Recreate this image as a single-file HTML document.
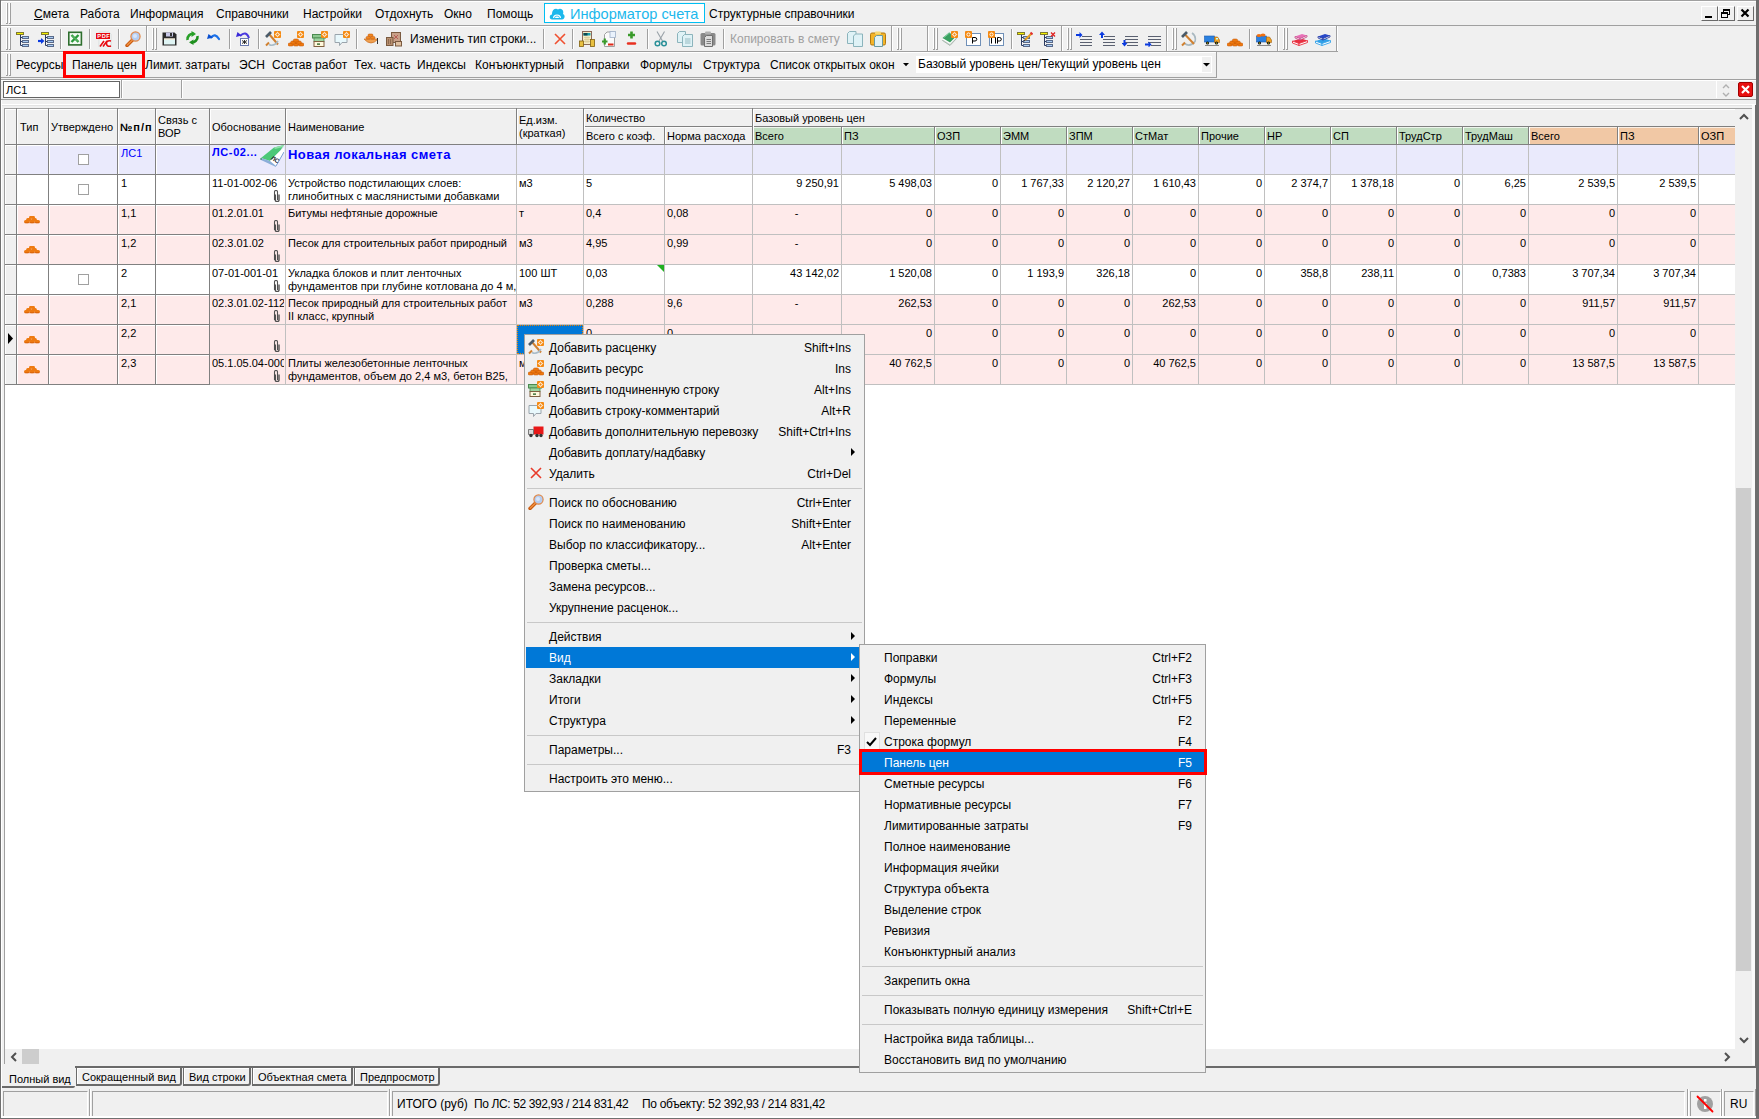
<!DOCTYPE html><html><head><meta charset="utf-8"><style>
*{margin:0;padding:0;box-sizing:border-box}
html,body{width:1759px;height:1119px;overflow:hidden;background:#f0f0f0;font-family:"Liberation Sans", sans-serif;color:#000}
.a{position:absolute}
.t{position:absolute;white-space:nowrap;line-height:13px}
.g{font-size:11px}
.m{font-size:12px}
</style></head><body>
<div class="a" style="left:1px;top:25px;width:1755px;height:1px;background:#a0a0a0"></div>
<div class="a" style="left:6px;top:3px;width:1px;height:21px;background:#fff"></div>
<div class="a" style="left:7px;top:3px;width:1px;height:21px;background:#a0a0a0"></div>
<div class="a" style="left:6px;top:23px;width:2px;height:1px;background:#a0a0a0"></div>
<div class="a" style="left:9px;top:3px;width:1px;height:21px;background:#fff"></div>
<div class="a" style="left:10px;top:3px;width:1px;height:21px;background:#a0a0a0"></div>
<div class="a" style="left:9px;top:23px;width:2px;height:1px;background:#a0a0a0"></div>
<div class="a" style="left:1px;top:1px;width:1755px;height:1px;background:#fff"></div>
<div class="a" style="left:1px;top:1px;width:1px;height:24px;background:#fff"></div>
<div class="t m" style="left:34px;top:8px;"><u>С</u>мета</div>
<div class="t m" style="left:80px;top:8px;">Работа</div>
<div class="t m" style="left:130px;top:8px;">Информация</div>
<div class="t m" style="left:216px;top:8px;">Справочники</div>
<div class="t m" style="left:303px;top:8px;">Настройки</div>
<div class="t m" style="left:375px;top:8px;">Отдохнуть</div>
<div class="t m" style="left:444px;top:8px;">Окно</div>
<div class="t m" style="left:487px;top:8px;">Помощь</div>
<div class="a" style="left:544px;top:3px;width:161px;height:20px;background:#fff;border:1px solid #00bff3"></div>
<svg class="a" style="left:549px;top:7px" width="16" height="13" viewBox="0 0 16 13"><path d="M3 12.5 C0 12.5 0 7.5 3 7.5 C2.5 3 6.5 0.5 9 2.5 C11.5 0.5 15.5 3 14 7 C16.5 8 16 12.5 13 12.5 Z" fill="#1cb8ec"/><path d="M4 11 A4 3.5 0 0 1 12 11 Z" fill="#fff"/><path d="M5.5 11 A2.5 2 0 0 1 10.5 11" stroke="#1cb8ec" stroke-width=".8" fill="none"/></svg>
<div class="t " style="left:570px;top:5px;font-size:14.6px;color:#1cb8ec;line-height:18px">Информатор счета</div>
<div class="t m" style="left:709px;top:8px;">Структурные справочники</div>
<div class="a" style="left:1701px;top:6px;width:17px;height:15px;background:#f0f0f0;border-top:1px solid #fff;border-left:1px solid #fff;border-right:1px solid #696969;border-bottom:1px solid #696969"></div>
<div class="a" style="left:1718px;top:6px;width:17px;height:15px;background:#f0f0f0;border-top:1px solid #fff;border-left:1px solid #fff;border-right:1px solid #696969;border-bottom:1px solid #696969"></div>
<div class="a" style="left:1737px;top:6px;width:17px;height:15px;background:#f0f0f0;border-top:1px solid #fff;border-left:1px solid #fff;border-right:1px solid #696969;border-bottom:1px solid #696969"></div>
<svg class="a" style="left:1701px;top:6px" width="54" height="16"><rect x="4" y="10" width="7" height="2" fill="#000"/><rect x="22.5" y="3.5" width="6" height="5" fill="none" stroke="#000" stroke-width="1"/><rect x="22" y="3" width="7" height="2" fill="#000"/><rect x="20.5" y="6.5" width="6" height="5" fill="#f0f0f0" stroke="#000" stroke-width="1"/><rect x="20" y="6" width="7" height="2" fill="#000"/><path d="M40.5 3.5 L47.5 10.5 M47.5 3.5 L40.5 10.5" stroke="#000" stroke-width="2.2"/></svg>
<div class="a" style="left:1px;top:26px;width:1336px;height:1px;background:#fff"></div>
<div class="a" style="left:1px;top:51px;width:1337px;height:1px;background:#a0a0a0"></div>
<div class="a" style="left:6px;top:28px;width:1px;height:22px;background:#fff"></div>
<div class="a" style="left:7px;top:28px;width:1px;height:22px;background:#a0a0a0"></div>
<div class="a" style="left:6px;top:49px;width:2px;height:1px;background:#a0a0a0"></div>
<div class="a" style="left:9px;top:28px;width:1px;height:22px;background:#fff"></div>
<div class="a" style="left:10px;top:28px;width:1px;height:22px;background:#a0a0a0"></div>
<div class="a" style="left:9px;top:49px;width:2px;height:1px;background:#a0a0a0"></div>
<div class="a" style="left:152px;top:28px;width:1px;height:22px;background:#fff"></div>
<div class="a" style="left:153px;top:28px;width:1px;height:22px;background:#a0a0a0"></div>
<div class="a" style="left:152px;top:49px;width:2px;height:1px;background:#a0a0a0"></div>
<div class="a" style="left:155px;top:28px;width:1px;height:22px;background:#fff"></div>
<div class="a" style="left:156px;top:28px;width:1px;height:22px;background:#a0a0a0"></div>
<div class="a" style="left:155px;top:49px;width:2px;height:1px;background:#a0a0a0"></div>
<div class="a" style="left:897px;top:28px;width:1px;height:22px;background:#fff"></div>
<div class="a" style="left:898px;top:28px;width:1px;height:22px;background:#a0a0a0"></div>
<div class="a" style="left:897px;top:49px;width:2px;height:1px;background:#a0a0a0"></div>
<div class="a" style="left:900px;top:28px;width:1px;height:22px;background:#fff"></div>
<div class="a" style="left:901px;top:28px;width:1px;height:22px;background:#a0a0a0"></div>
<div class="a" style="left:900px;top:49px;width:2px;height:1px;background:#a0a0a0"></div>
<div class="a" style="left:933px;top:28px;width:1px;height:22px;background:#fff"></div>
<div class="a" style="left:934px;top:28px;width:1px;height:22px;background:#a0a0a0"></div>
<div class="a" style="left:933px;top:49px;width:2px;height:1px;background:#a0a0a0"></div>
<div class="a" style="left:936px;top:28px;width:1px;height:22px;background:#fff"></div>
<div class="a" style="left:937px;top:28px;width:1px;height:22px;background:#a0a0a0"></div>
<div class="a" style="left:936px;top:49px;width:2px;height:1px;background:#a0a0a0"></div>
<div class="a" style="left:1067px;top:28px;width:1px;height:22px;background:#fff"></div>
<div class="a" style="left:1068px;top:28px;width:1px;height:22px;background:#a0a0a0"></div>
<div class="a" style="left:1067px;top:49px;width:2px;height:1px;background:#a0a0a0"></div>
<div class="a" style="left:1070px;top:28px;width:1px;height:22px;background:#fff"></div>
<div class="a" style="left:1071px;top:28px;width:1px;height:22px;background:#a0a0a0"></div>
<div class="a" style="left:1070px;top:49px;width:2px;height:1px;background:#a0a0a0"></div>
<div class="a" style="left:1172px;top:28px;width:1px;height:22px;background:#fff"></div>
<div class="a" style="left:1173px;top:28px;width:1px;height:22px;background:#a0a0a0"></div>
<div class="a" style="left:1172px;top:49px;width:2px;height:1px;background:#a0a0a0"></div>
<div class="a" style="left:1175px;top:28px;width:1px;height:22px;background:#fff"></div>
<div class="a" style="left:1176px;top:28px;width:1px;height:22px;background:#a0a0a0"></div>
<div class="a" style="left:1175px;top:49px;width:2px;height:1px;background:#a0a0a0"></div>
<div class="a" style="left:1283px;top:28px;width:1px;height:22px;background:#fff"></div>
<div class="a" style="left:1284px;top:28px;width:1px;height:22px;background:#a0a0a0"></div>
<div class="a" style="left:1283px;top:49px;width:2px;height:1px;background:#a0a0a0"></div>
<div class="a" style="left:1286px;top:28px;width:1px;height:22px;background:#fff"></div>
<div class="a" style="left:1287px;top:28px;width:1px;height:22px;background:#a0a0a0"></div>
<div class="a" style="left:1286px;top:49px;width:2px;height:1px;background:#a0a0a0"></div>
<div class="a" style="left:146px;top:26px;width:1px;height:25px;background:#a0a0a0"></div>
<div class="a" style="left:147px;top:26px;width:1px;height:25px;background:#fff"></div>
<div class="a" style="left:891px;top:26px;width:1px;height:25px;background:#a0a0a0"></div>
<div class="a" style="left:892px;top:26px;width:1px;height:25px;background:#fff"></div>
<div class="a" style="left:927px;top:26px;width:1px;height:25px;background:#a0a0a0"></div>
<div class="a" style="left:928px;top:26px;width:1px;height:25px;background:#fff"></div>
<div class="a" style="left:1061px;top:26px;width:1px;height:25px;background:#a0a0a0"></div>
<div class="a" style="left:1062px;top:26px;width:1px;height:25px;background:#fff"></div>
<div class="a" style="left:1166px;top:26px;width:1px;height:25px;background:#a0a0a0"></div>
<div class="a" style="left:1167px;top:26px;width:1px;height:25px;background:#fff"></div>
<div class="a" style="left:1277px;top:26px;width:1px;height:25px;background:#a0a0a0"></div>
<div class="a" style="left:1278px;top:26px;width:1px;height:25px;background:#fff"></div>
<div class="a" style="left:1336px;top:26px;width:1px;height:25px;background:#a0a0a0"></div>
<div class="a" style="left:1337px;top:26px;width:1px;height:25px;background:#fff"></div>
<div class="a" style="left:60px;top:29px;width:1px;height:20px;background:#a0a0a0"></div>
<div class="a" style="left:61px;top:29px;width:1px;height:20px;background:#fff"></div>
<div class="a" style="left:89px;top:29px;width:1px;height:20px;background:#a0a0a0"></div>
<div class="a" style="left:90px;top:29px;width:1px;height:20px;background:#fff"></div>
<div class="a" style="left:118px;top:29px;width:1px;height:20px;background:#a0a0a0"></div>
<div class="a" style="left:119px;top:29px;width:1px;height:20px;background:#fff"></div>
<div class="a" style="left:229px;top:29px;width:1px;height:20px;background:#a0a0a0"></div>
<div class="a" style="left:230px;top:29px;width:1px;height:20px;background:#fff"></div>
<div class="a" style="left:258px;top:29px;width:1px;height:20px;background:#a0a0a0"></div>
<div class="a" style="left:259px;top:29px;width:1px;height:20px;background:#fff"></div>
<div class="a" style="left:356px;top:29px;width:1px;height:20px;background:#a0a0a0"></div>
<div class="a" style="left:357px;top:29px;width:1px;height:20px;background:#fff"></div>
<div class="a" style="left:543px;top:29px;width:1px;height:20px;background:#a0a0a0"></div>
<div class="a" style="left:544px;top:29px;width:1px;height:20px;background:#fff"></div>
<div class="a" style="left:572px;top:29px;width:1px;height:20px;background:#a0a0a0"></div>
<div class="a" style="left:573px;top:29px;width:1px;height:20px;background:#fff"></div>
<div class="a" style="left:647px;top:29px;width:1px;height:20px;background:#a0a0a0"></div>
<div class="a" style="left:648px;top:29px;width:1px;height:20px;background:#fff"></div>
<div class="a" style="left:723px;top:29px;width:1px;height:20px;background:#a0a0a0"></div>
<div class="a" style="left:724px;top:29px;width:1px;height:20px;background:#fff"></div>
<div class="a" style="left:1011px;top:29px;width:1px;height:20px;background:#a0a0a0"></div>
<div class="a" style="left:1012px;top:29px;width:1px;height:20px;background:#fff"></div>
<div class="a" style="left:1249px;top:29px;width:1px;height:20px;background:#a0a0a0"></div>
<div class="a" style="left:1250px;top:29px;width:1px;height:20px;background:#fff"></div>
<svg class="a" style="left:16px;top:31px" width="16" height="16" viewBox="0 0 16 16"><rect x="0.5" y="1.5" width="7" height="2" fill="#f4f000" stroke="#807a30" stroke-width="1"/><path d="M4.5 4 V14.5 M4.5 6.5 H6 M4.5 10.5 H6 M4.5 14.5 H6" stroke="#2a3a60" stroke-width="1" fill="none"/><rect x="6.5" y="5.5" width="6" height="2" fill="#a8ccf4" stroke="#5a6a8a" stroke-width="1"/><rect x="6.5" y="9.5" width="6" height="2" fill="#a8ccf4" stroke="#5a6a8a" stroke-width="1"/><rect x="6.5" y="13.5" width="6" height="2" fill="#a8ccf4" stroke="#5a6a8a" stroke-width="1"/></svg>
<svg class="a" style="left:38px;top:31px" width="16" height="16" viewBox="0 0 16 16"><rect x="3.5" y="1.5" width="7" height="2" fill="#f4f000" stroke="#807a30" stroke-width="1"/><path d="M7.5 4 V14.5 M7.5 6.5 H9 M7.5 10.5 H9 M7.5 14.5 H9" stroke="#2a3a60" stroke-width="1" fill="none"/><rect x="9.5" y="5.5" width="6" height="2" fill="#a8ccf4" stroke="#5a6a8a" stroke-width="1"/><rect x="9.5" y="9.5" width="6" height="2" fill="#a8ccf4" stroke="#5a6a8a" stroke-width="1"/><rect x="9.5" y="13.5" width="6" height="2" fill="#a8ccf4" stroke="#5a6a8a" stroke-width="1"/><path d="M0 10 H3.5" stroke="#0a3ae0" stroke-width="2.2"/><path d="M3 7 L6.5 10 L3 13Z" fill="#0a3ae0"/></svg>
<svg class="a" style="left:68px;top:31px" width="16" height="16" viewBox="0 0 16 16"><rect x="0.8" y="1.3" width="12.6" height="12.6" fill="#f4fbf4" stroke="#2e6e2e" stroke-width="1.6"/><path d="M3.5 4 L10.5 11 M10.5 4 L3.5 11" stroke="#2a9a3a" stroke-width="2.4"/><path d="M4 4.5 L10 10.5" stroke="#9ad89a" stroke-width=".7"/></svg>
<svg class="a" style="left:96px;top:31px" width="16" height="16" viewBox="0 0 16 16"><path d="M3 1 H13 L15 3 V16 H3Z" fill="#f8f8f8" stroke="#d0d8d8" stroke-width=".8"/><rect x="0" y="2" width="14" height="6" fill="#e80a10"/><text x="1.3" y="7.3" font-size="5.6" font-weight="bold" font-family="Liberation Sans" fill="#fff" letter-spacing=".6">PDF</text><path d="M4 15.5 L8 10 M7 15.5 L11 10" stroke="#e80a10" stroke-width="1.6"/><path d="M15 10 Q10 9 10.5 13 Q11 16 15 15" stroke="#e80a10" stroke-width="1.6" fill="none"/></svg>
<svg class="a" style="left:125px;top:31px" width="16" height="16" viewBox="0 0 16 16"><path d="M2 14.5 L7.5 9" stroke="#c85a10" stroke-width="3.4" stroke-linecap="round"/><path d="M2.3 14 L7 9.5" stroke="#f09040" stroke-width="1.4" stroke-linecap="round"/><circle cx="10.5" cy="5.5" r="4.6" fill="#b4cdf2" stroke="#e08848" stroke-width="1.2"/><circle cx="10" cy="5" r="2" fill="#d8e6fa"/></svg>
<svg class="a" style="left:162px;top:31px" width="16" height="16" viewBox="0 0 16 16"><path d="M0.5 1.5 H12.5 L14.5 3.5 V14.5 H0.5Z" fill="#2a2a2a"/><rect x="4" y="1.5" width="7" height="4" fill="#c8c8e8"/><rect x="8" y="2" width="2" height="3" fill="#333"/><rect x="2" y="7.5" width="11" height="6" fill="#dff4f4"/><rect x="2" y="7.5" width="11" height="1" fill="#fce4c8"/></svg>
<svg class="a" style="left:185px;top:31px" width="16" height="16" viewBox="0 0 16 16"><path d="M2.5 9 A5.5 5.5 0 0 1 9 2.8" stroke="#28a028" stroke-width="2.6" fill="none"/><path d="M12.5 5 A5.5 5.5 0 0 1 6 11.2" stroke="#1e901e" stroke-width="2.6" fill="none"/><path d="M6.5 0 L11 3 L6.5 6Z" fill="#28a028"/><path d="M8.5 8.5 L4 11.2 L8.5 14Z" fill="#1e901e"/></svg>
<svg class="a" style="left:207px;top:31px" width="16" height="16" viewBox="0 0 16 16"><path d="M4 6.5 Q8 1.5 12 8" stroke="#1a70e8" stroke-width="2.2" fill="none" stroke-linecap="round"/><path d="M0 8 L1.5 3 L6 6.5Z" fill="#0a50d0"/></svg>
<svg class="a" style="left:236px;top:31px" width="16" height="16" viewBox="0 0 16 16"><path d="M4 5 Q10 -1 13 7" stroke="#4a3ae0" stroke-width="2" fill="none"/><path d="M0 6 L1.5 1 L5.5 4.5Z" fill="#3a2ad8"/><rect x="4.5" y="7.5" width="8" height="7" fill="#fff" stroke="#6a7ab0" stroke-width="1"/><path d="M6 9.5 L11 12.5 M11 9.5 L6 12.5 M8.5 9 V13" stroke="#222" stroke-width=".9"/></svg>
<svg class="a" style="left:265px;top:31px" width="16" height="16" viewBox="0 0 16 16"><path d="M4 3 L13 13.5" stroke="#d08030" stroke-width="2"/><path d="M1 6 L6 1" stroke="#4a5a68" stroke-width="2.6"/><path d="M1 14.5 L4 11.5" stroke="#d08030" stroke-width="2"/><path d="M4 13.5 Q9 16 13 10" stroke="#a8bcc8" stroke-width="1.6" fill="none"/><rect x="9" y="0" width="7" height="7" rx="1" fill="#f58a12"/><circle cx="12.5" cy="3.5" r="1.6" fill="none" stroke="#fff" stroke-width="1"/><path d="M12.5 0.8 V1.6 M12.5 5.4 V6.2 M9.8 3.5 H10.6 M14.4 3.5 H15.2" stroke="#fff" stroke-width=".8"/></svg>
<svg class="a" style="left:288px;top:31px" width="16" height="16" viewBox="0 0 16 16"><g fill="#ee7a10" stroke="#c05000" stroke-width=".5"><rect x="0" y="12" width="5.4" height="3" rx="1.5"/><rect x="5.3" y="12" width="5.4" height="3" rx="1.5"/><rect x="10.6" y="12" width="5.4" height="3" rx="1.5"/><rect x="2.6" y="10" width="5.4" height="3" rx="1.5"/><rect x="8" y="10" width="5.4" height="3" rx="1.5"/><rect x="5.3" y="8" width="5.4" height="3" rx="1.5"/></g><rect x="9" y="0" width="7" height="7" rx="1" fill="#f58a12"/><circle cx="12.5" cy="3.5" r="1.6" fill="none" stroke="#fff" stroke-width="1"/><path d="M12.5 0.8 V1.6 M12.5 5.4 V6.2 M9.8 3.5 H10.6 M14.4 3.5 H15.2" stroke="#fff" stroke-width=".8"/></svg>
<svg class="a" style="left:312px;top:31px" width="16" height="16" viewBox="0 0 16 16"><rect x="0.5" y="3.5" width="13" height="3.5" fill="#8cc890" stroke="#4a8a50" stroke-width="1"/><rect x="2" y="7" width="10" height="3.5" fill="#9cd4a0" stroke="#4a8a50" stroke-width=".8"/><rect x="2" y="10.5" width="10" height="5" fill="#fff8dc" stroke="#806040" stroke-width="1"/><rect x="5" y="12.5" width="3" height="1.2" fill="#105010"/><rect x="9" y="0" width="7" height="7" rx="1" fill="#f58a12"/><circle cx="12.5" cy="3.5" r="1.6" fill="none" stroke="#fff" stroke-width="1"/><path d="M12.5 0.8 V1.6 M12.5 5.4 V6.2 M9.8 3.5 H10.6 M14.4 3.5 H15.2" stroke="#fff" stroke-width=".8"/></svg>
<svg class="a" style="left:334px;top:31px" width="16" height="16" viewBox="0 0 16 16"><path d="M1 3.5 H13 V11.5 H8 L5.5 14.5 V11.5 H1Z" fill="#e8f8fc" stroke="#9aa4ac" stroke-width="1"/><rect x="9" y="0" width="7" height="7" rx="1" fill="#f58a12"/><circle cx="12.5" cy="3.5" r="1.6" fill="none" stroke="#fff" stroke-width="1"/><path d="M12.5 0.8 V1.6 M12.5 5.4 V6.2 M9.8 3.5 H10.6 M14.4 3.5 H15.2" stroke="#fff" stroke-width=".8"/></svg>
<svg class="a" style="left:363px;top:31px" width="16" height="16" viewBox="0 0 16 16"><path d="M1 8 Q8 16 15 8Z" fill="#f0a050" stroke="#c06010" stroke-width=".6"/><g fill="#f08820" stroke="#c05000" stroke-width=".5"><rect x="3" y="5.5" width="4.5" height="2.5" rx="1.2"/><rect x="7.5" y="5.5" width="4.5" height="2.5" rx="1.2"/><rect x="5" y="3" width="5" height="2.5" rx="1.2"/></g><path d="M14.5 7 V13" stroke="#333" stroke-width="1"/></svg>
<svg class="a" style="left:386px;top:31px" width="16" height="16" viewBox="0 0 16 16"><rect x="5.5" y="1.5" width="9" height="10" fill="#c8a088" stroke="#7a5a40" stroke-width="1"/><path d="M8 4 L12 8 M12 4 L8 8" stroke="#b04040" stroke-width=".7"/><rect x="0.5" y="6.5" width="6.5" height="8" fill="#b89070" stroke="#7a5a40" stroke-width="1"/><path d="M2.5 8 V13 M4.5 8 V13" stroke="#7a5a40" stroke-width=".7"/><rect x="9.5" y="10.5" width="6" height="4.5" fill="#e0c0a0" stroke="#7a5a40" stroke-width="1"/></svg>
<svg class="a" style="left:552px;top:31px" width="16" height="16" viewBox="0 0 16 16"><path d="M3 3 L13 13 M13 3 L3 13" stroke="#f05030" stroke-width="1.6"/></svg>
<svg class="a" style="left:579px;top:31px" width="16" height="16" viewBox="0 0 16 16"><rect x="3.5" y="0.5" width="9" height="13" fill="#f4ecc8" stroke="#8a6a5a" stroke-width="1"/><rect x="4.5" y="2" width="7" height="2.5" fill="#1aa0b0"/><rect x="4.5" y="2" width="4" height="2.5" fill="#104a50"/><path d="M5 6.5 H11 M5 8.5 H11 M5 10.5 H11 M7 5.5 V12 M9 5.5 V12" stroke="#d8c890" stroke-width=".7"/><g fill="#e8c040" stroke="#806010" stroke-width=".8"><rect x="0.5" y="10" width="4" height="5.5"/><rect x="11.5" y="8.5" width="4" height="7"/></g></svg>
<svg class="a" style="left:602px;top:31px" width="16" height="16" viewBox="0 0 16 16"><path d="M2.5 3.5 L5 1 H12.5 V15.5 H2.5Z" fill="#fafafa" stroke="#a0a0a0" stroke-width="1"/><rect x="8" y="0.5" width="5.5" height="6" fill="#eaf2fc" stroke="#a0b0c8" stroke-width=".8"/><path d="M0 10.5 H5.5 M2.75 7.5 V13.5" stroke="#3a9a2a" stroke-width="2.2"/><path d="M6 13.5 H11.5" stroke="#e02818" stroke-width="2"/></svg>
<svg class="a" style="left:624px;top:31px" width="16" height="16" viewBox="0 0 16 16"><path d="M4 4 H11 M7.5 0.5 V7.5" stroke="#3a9a2a" stroke-width="2.6"/><path d="M4 12.5 H11" stroke="#e83020" stroke-width="2.4" stroke-linecap="round"/></svg>
<svg class="a" style="left:653px;top:31px" width="16" height="16" viewBox="0 0 16 16"><path d="M4 0.5 L9.5 10 M11.5 0.5 L6 10" stroke="#9aa2a8" stroke-width="1.1"/><circle cx="4.5" cy="12.5" r="2.3" fill="none" stroke="#2a9098" stroke-width="1.5"/><circle cx="11" cy="12.5" r="2.3" fill="none" stroke="#2a9098" stroke-width="1.5"/></svg>
<svg class="a" style="left:677px;top:31px" width="16" height="16" viewBox="0 0 16 16"><path d="M0.5 2.5 L2.5 0.5 H8.5 V11.5 H0.5Z" fill="#dff2f6" stroke="#8cb4bc" stroke-width="1"/><path d="M5.5 5.5 L7.5 3.5 H15.5 V15.5 H5.5Z" fill="#dff2f6" stroke="#8cb4bc" stroke-width="1"/><path d="M8 8 H13.5 M8 10 H13.5 M8 12 H13.5" stroke="#8cb4bc" stroke-width=".9"/></svg>
<svg class="a" style="left:700px;top:31px" width="16" height="16" viewBox="0 0 16 16"><rect x="0.5" y="2" width="15" height="12.5" rx="1.5" fill="#8a8a8a"/><rect x="5" y="0.5" width="6" height="3" rx="1" fill="#b0b0b0"/><path d="M4.5 6.5 L6.5 4.5 H12.5 V15.5 H4.5Z" fill="#dcdcdc" stroke="#707070" stroke-width="1"/><path d="M6.5 8.5 H11 M6.5 10.5 H11 M6.5 12.5 H11" stroke="#707070" stroke-width=".9"/></svg>
<svg class="a" style="left:847px;top:31px" width="16" height="16" viewBox="0 0 16 16"><path d="M0.5 2.5 L2.5 0.5 H9 V12.5 H0.5Z" fill="#dff2f6" stroke="#8cb4bc" stroke-width="1"/><path d="M6.5 5 L8.5 3 H15.5 V15.5 H6.5Z" fill="#dff2f6" stroke="#8cb4bc" stroke-width="1"/></svg>
<svg class="a" style="left:870px;top:31px" width="16" height="16" viewBox="0 0 16 16"><rect x="0.5" y="2" width="15" height="12" rx="1.5" fill="#f4b428" stroke="#b07a10" stroke-width="1"/><rect x="5" y="0.5" width="6" height="3" rx="1" fill="#f8d870"/><path d="M4.5 6.5 L6.5 4.5 H12.5 V15.5 H4.5Z" fill="#dff2f6" stroke="#6a9aa0" stroke-width="1"/></svg>
<svg class="a" style="left:942px;top:31px" width="16" height="16" viewBox="0 0 16 16"><path d="M0.5 9.5 L7 4 L14.5 7.5 L8 14.5Z" fill="#c8d0cc" stroke="#8aa090" stroke-width=".6"/><path d="M0.5 8.5 L7 3 L14.5 6.5 L8 13Z" fill="#fff"/><path d="M0.5 7 L7 1.5 L14.5 5 L8 11.5Z" fill="#3aa060"/><path d="M2 6.5 L7.5 2 L13 4.8" stroke="#8ad8a8" stroke-width=".8" fill="none"/><rect x="9" y="0" width="7" height="7" rx="1" fill="#f58a12"/><circle cx="12.5" cy="3.5" r="1.6" fill="none" stroke="#fff" stroke-width="1"/><path d="M12.5 0.8 V1.6 M12.5 5.4 V6.2 M9.8 3.5 H10.6 M14.4 3.5 H15.2" stroke="#fff" stroke-width=".8"/></svg>
<svg class="a" style="left:965px;top:31px" width="16" height="16" viewBox="0 0 16 16"><rect x="1.5" y="2.5" width="14" height="12" fill="#fff" stroke="#7090b8" stroke-width="1"/><path d="M7.5 12.5 V6.5 H10 Q11.8 6.5 11.8 8.3 Q11.8 10 10 10 H7.5" stroke="#000" stroke-width="1" fill="none"/><rect x="0" y="0" width="7" height="7" rx="1" fill="#f58a12"/><circle cx="3.5" cy="3.5" r="1.6" fill="none" stroke="#fff" stroke-width="1"/></svg>
<svg class="a" style="left:988px;top:31px" width="16" height="16" viewBox="0 0 16 16"><rect x="1.5" y="2.5" width="14" height="12" fill="#fff" stroke="#7090b8" stroke-width="1"/><path d="M3.5 12.5 V6.5 H7.5 V12.5" stroke="#000" stroke-width="1" fill="none"/><path d="M9.5 12.5 V6.5 H11.5 Q13.3 6.5 13.3 8.3 Q13.3 10 11.5 10 H9.5" stroke="#000" stroke-width="1" fill="none"/><rect x="0" y="0" width="7" height="7" rx="1" fill="#f58a12"/><circle cx="3.5" cy="3.5" r="1.6" fill="none" stroke="#fff" stroke-width="1"/></svg>
<svg class="a" style="left:1017px;top:31px" width="16" height="16" viewBox="0 0 16 16"><rect x="0.5" y="1.5" width="7" height="2" fill="#f4f000" stroke="#807a30" stroke-width="1"/><path d="M4.5 4 V14.5 M4.5 6.5 H6 M4.5 10.5 H6 M4.5 14.5 H6" stroke="#2a3a60" stroke-width="1" fill="none"/><rect x="6.5" y="5.5" width="6" height="2" fill="#a8ccf4" stroke="#5a6a8a" stroke-width="1"/><rect x="6.5" y="9.5" width="6" height="2" fill="#a8ccf4" stroke="#5a6a8a" stroke-width="1"/><rect x="6.5" y="13.5" width="6" height="2" fill="#a8ccf4" stroke="#5a6a8a" stroke-width="1"/><path d="M8 9 L14.5 2.5" stroke="#e8a020" stroke-width="2.2"/><path d="M13.5 1.5 L15.5 3.5" stroke="#e03030" stroke-width="2"/><path d="M7 10.5 L8 8.5" stroke="#333" stroke-width="1"/></svg>
<svg class="a" style="left:1040px;top:31px" width="16" height="16" viewBox="0 0 16 16"><rect x="0.5" y="1.5" width="7" height="2" fill="#f4f000" stroke="#807a30" stroke-width="1"/><path d="M4.5 4 V14.5 M4.5 6.5 H6 M4.5 10.5 H6 M4.5 14.5 H6" stroke="#2a3a60" stroke-width="1" fill="none"/><rect x="6.5" y="5.5" width="6" height="2" fill="#a8ccf4" stroke="#5a6a8a" stroke-width="1"/><rect x="6.5" y="9.5" width="6" height="2" fill="#a8ccf4" stroke="#5a6a8a" stroke-width="1"/><rect x="6.5" y="13.5" width="6" height="2" fill="#a8ccf4" stroke="#5a6a8a" stroke-width="1"/><path d="M11 1.5 L15 5.5 M15 1.5 L11 5.5" stroke="#e02020" stroke-width="1.3"/></svg>
<svg class="a" style="left:1076px;top:31px" width="16" height="16" viewBox="0 0 16 16"><path d="M6 5.5 H16 M4 8.5 H16 M4 11.5 H16 M4 14.5 H16" stroke="#5a6070" stroke-width="1.2"/><path d="M0 4 H4" stroke="#0a3ae0" stroke-width="2"/><path d="M3.5 1 L6.5 4 L3.5 7Z" fill="#0a3ae0"/></svg>
<svg class="a" style="left:1099px;top:31px" width="16" height="16" viewBox="0 0 16 16"><path d="M5 5.5 H16 M4 8.5 H16 M4 11.5 H16 M4 14.5 H16" stroke="#5a6070" stroke-width="1.2"/><path d="M3 7 V3.5" stroke="#0a3ae0" stroke-width="2"/><path d="M0 4 L3 0.5 L6 4Z" fill="#0a3ae0"/></svg>
<svg class="a" style="left:1122px;top:31px" width="16" height="16" viewBox="0 0 16 16"><path d="M3 5.5 H16 M3 8.5 H16 M3 11.5 H16 M5 14.5 H16" stroke="#5a6070" stroke-width="1.2"/><path d="M2.5 9 V12.5" stroke="#0a3ae0" stroke-width="2"/><path d="M-0.5 12 L2.5 15.5 L5.5 12Z" fill="#0a3ae0"/></svg>
<svg class="a" style="left:1145px;top:31px" width="16" height="16" viewBox="0 0 16 16"><path d="M3 5.5 H16 M3 8.5 H16 M3 11.5 H16 M6 14.5 H16" stroke="#5a6070" stroke-width="1.2"/><path d="M0 13.5 H4" stroke="#0a3ae0" stroke-width="2"/><path d="M3.5 10.5 L6.5 13.5 L3.5 16.5Z" fill="#0a3ae0"/></svg>
<svg class="a" style="left:1181px;top:31px" width="16" height="16" viewBox="0 0 16 16"><path d="M3.5 12.5 Q9 16.5 14 10.5 Q15.5 5 11 2" stroke="#a8b8c0" stroke-width="1.6" fill="none"/><path d="M4 3.5 L13 13" stroke="#d08030" stroke-width="2"/><path d="M1 6 L6 1" stroke="#4a5a68" stroke-width="2.6"/><path d="M1 14.5 L4 11.5" stroke="#d08030" stroke-width="2"/></svg>
<svg class="a" style="left:1204px;top:31px" width="16" height="16" viewBox="0 0 16 16"><rect x="0.5" y="5" width="10" height="6" fill="#2a80e0" stroke="#1a5ab0" stroke-width=".6"/><path d="M10.5 6 H13.5 L15.5 9 V11.5 H10.5Z" fill="#f0a020" stroke="#a06010" stroke-width=".6"/><rect x="12" y="7" width="2" height="1.5" fill="#cfe"/><circle cx="3.5" cy="12" r="1.6" fill="#111"/><circle cx="12.5" cy="12" r="1.6" fill="#111"/><circle cx="3.5" cy="12" r=".6" fill="#ee0"/><circle cx="12.5" cy="12" r=".6" fill="#ee0"/><rect x="1" y="14" width="14" height="1" fill="#888"/></svg>
<svg class="a" style="left:1227px;top:31px" width="16" height="16" viewBox="0 0 16 16"><g fill="#ee7a10" stroke="#c05000" stroke-width=".5"><rect x="0" y="12" width="5.4" height="3" rx="1.5"/><rect x="5.3" y="12" width="5.4" height="3" rx="1.5"/><rect x="10.6" y="12" width="5.4" height="3" rx="1.5"/><rect x="2.6" y="10" width="5.4" height="3" rx="1.5"/><rect x="8" y="10" width="5.4" height="3" rx="1.5"/><rect x="5.3" y="8" width="5.4" height="3" rx="1.5"/></g></svg>
<svg class="a" style="left:1256px;top:31px" width="16" height="16" viewBox="0 0 16 16"><rect x="0.5" y="5" width="10" height="6" fill="#2a80e0" stroke="#1a5ab0" stroke-width=".6"/><g fill="#f07010"><ellipse cx="3" cy="4.5" rx="2.5" ry="1.5"/><ellipse cx="7" cy="4" rx="2.5" ry="1.5"/></g><path d="M10.5 6 H13.5 L15.5 9 V11.5 H10.5Z" fill="#f0a020" stroke="#a06010" stroke-width=".6"/><circle cx="3.5" cy="12" r="1.6" fill="#111"/><circle cx="12.5" cy="12" r="1.6" fill="#111"/><circle cx="3.5" cy="12" r=".6" fill="#ee0"/><circle cx="12.5" cy="12" r=".6" fill="#ee0"/><rect x="1" y="14" width="14" height="1" fill="#888"/></svg>
<svg class="a" style="left:1292px;top:31px" width="16" height="16" viewBox="0 0 16 16"><path d="M0.5 10 L9 7.5 L15.5 9.5 L7 12.5Z" fill="#e83040"/><path d="M0.5 10 L7 12.5 L7 14.5 L0.5 12Z" fill="#fff" stroke="#e83040" stroke-width=".9"/><path d="M7 12.5 L15.5 9.5 L15.5 11.5 L7 14.5Z" fill="#fff" stroke="#e83040" stroke-width=".9"/><path d="M3 5.5 L10 3 L15 4.5 L8 7.5Z" fill="#e870b8"/><path d="M3 5.5 L8 7.5 L8 9 L3 7Z" fill="#fff" stroke="#c04080" stroke-width=".8"/><path d="M8 7.5 L15 4.5 L15 6 L8 9Z" fill="#fff" stroke="#c04080" stroke-width=".8"/></svg>
<svg class="a" style="left:1315px;top:31px" width="16" height="16" viewBox="0 0 16 16"><path d="M0.5 10 L9 7.5 L15.5 9.5 L7 12.5Z" fill="#30a0e8"/><path d="M0.5 10 L7 12.5 L7 14.5 L0.5 12Z" fill="#fff" stroke="#30a0e8" stroke-width=".9"/><path d="M7 12.5 L15.5 9.5 L15.5 11.5 L7 14.5Z" fill="#fff" stroke="#30a0e8" stroke-width=".9"/><path d="M3 5.5 L10 3 L15 4.5 L8 7.5Z" fill="#2848c8"/><path d="M3 5.5 L8 7.5 L8 9 L3 7Z" fill="#fff" stroke="#1a30a0" stroke-width=".8"/><path d="M8 7.5 L15 4.5 L15 6 L8 9Z" fill="#fff" stroke="#1a30a0" stroke-width=".8"/></svg>
<div class="t m" style="left:410px;top:33px;">Изменить тип строки...</div>
<div class="t m" style="left:730px;top:33px;color:#a0a0a0">Копировать в смету</div>
<div class="a" style="left:1px;top:52px;width:1215px;height:1px;background:#fff"></div>
<div class="a" style="left:1px;top:77px;width:1216px;height:1px;background:#a0a0a0"></div>
<div class="a" style="left:6px;top:54px;width:1px;height:22px;background:#fff"></div>
<div class="a" style="left:7px;top:54px;width:1px;height:22px;background:#a0a0a0"></div>
<div class="a" style="left:6px;top:75px;width:2px;height:1px;background:#a0a0a0"></div>
<div class="a" style="left:9px;top:54px;width:1px;height:22px;background:#fff"></div>
<div class="a" style="left:10px;top:54px;width:1px;height:22px;background:#a0a0a0"></div>
<div class="a" style="left:9px;top:75px;width:2px;height:1px;background:#a0a0a0"></div>
<div class="a" style="left:1216px;top:52px;width:1px;height:25px;background:#a0a0a0"></div>
<div class="t m" style="left:16px;top:59px;">Ресурсы</div>
<div class="t m" style="left:72px;top:59px;">Панель цен</div>
<div class="t m" style="left:145px;top:59px;">Лимит. затраты</div>
<div class="t m" style="left:239px;top:59px;">ЭСН</div>
<div class="t m" style="left:272px;top:59px;">Состав работ</div>
<div class="t m" style="left:354px;top:59px;">Тех. часть</div>
<div class="t m" style="left:417px;top:59px;">Индексы</div>
<div class="t m" style="left:475px;top:59px;">Конъюнктурный</div>
<div class="t m" style="left:576px;top:59px;">Поправки</div>
<div class="t m" style="left:640px;top:59px;">Формулы</div>
<div class="t m" style="left:703px;top:59px;">Структура</div>
<div class="t m" style="left:770px;top:59px;">Список открытых окон</div>
<svg class="a" style="left:903px;top:63px" width="8" height="5" viewBox="0 0 8 5"><path d="M0 0 H6 L3 3.2Z" fill="#000"/></svg>
<div class="a" style="left:916px;top:56px;width:296px;height:17px;background:#fff"></div>
<div class="a" style="left:1202px;top:57px;width:9px;height:15px;background:#f0f0f0"></div>
<div class="t m" style="left:918px;top:58px;">Базовый уровень цен/Текущий уровень цен</div>
<svg class="a" style="left:1203px;top:63px" width="8" height="5" viewBox="0 0 8 5"><path d="M0 0 H7 L3.5 3.5Z" fill="#000"/></svg>
<div class="a" style="left:63px;top:51px;width:82px;height:27px;border:3px solid #ff0000"></div>
<div class="a" style="left:1px;top:79px;width:1755px;height:1px;background:#a0a0a0"></div>
<div class="a" style="left:1px;top:80px;width:1755px;height:1px;background:#fff"></div>
<div class="a" style="left:3px;top:81px;width:117px;height:17px;background:#fff;border:1px solid #646464"></div>
<div class="t g" style="left:6px;top:84px;">ЛС1</div>
<div class="a" style="left:121px;top:80px;width:1px;height:18px;background:#a0a0a0"></div>
<div class="a" style="left:122px;top:80px;width:1px;height:18px;background:#fff"></div>
<div class="a" style="left:181px;top:80px;width:1px;height:18px;background:#a0a0a0"></div>
<div class="a" style="left:182px;top:80px;width:1px;height:18px;background:#fff"></div>
<div class="a" style="left:1716px;top:80px;width:1px;height:18px;background:#fff"></div>
<svg class="a" style="left:1722px;top:83px" width="9" height="15" viewBox="0 0 9 15"><path d="M1 5 L4 2 L7 5 M1 10 L4 13 L7 10" stroke="#b0b0b0" stroke-width="1.4" fill="none"/></svg>
<div class="a" style="left:1738px;top:82px;width:15px;height:15px;background:#e81010;border:1px solid #a00000;border-radius:2px"></div>
<svg class="a" style="left:1738px;top:82px" width="15" height="15" viewBox="0 0 15 15"><path d="M4 4 L11 11 M11 4 L4 11" stroke="#fff" stroke-width="2.2"/></svg>
<div class="a" style="left:1px;top:99px;width:1755px;height:1px;background:#a0a0a0"></div>
<div class="a" style="left:1px;top:104px;width:1754px;height:1px;background:#fff"></div>
<div class="a" style="left:1px;top:105px;width:1754px;height:1px;background:#e3e3e3"></div>
<div class="a" style="left:4px;top:108px;width:1731px;height:941px;background:#fff"></div>
<div class="a" style="left:4px;top:108px;width:1731px;height:36px;background:#f0f0f0"></div>
<div class="a" style="left:753px;top:127px;width:88px;height:17px;background:#c0dcc0"></div>
<div class="a" style="left:842px;top:127px;width:92px;height:17px;background:#c0dcc0"></div>
<div class="a" style="left:935px;top:127px;width:65px;height:17px;background:#c0dcc0"></div>
<div class="a" style="left:1001px;top:127px;width:65px;height:17px;background:#c0dcc0"></div>
<div class="a" style="left:1067px;top:127px;width:65px;height:17px;background:#c0dcc0"></div>
<div class="a" style="left:1133px;top:127px;width:65px;height:17px;background:#c0dcc0"></div>
<div class="a" style="left:1199px;top:127px;width:65px;height:17px;background:#c0dcc0"></div>
<div class="a" style="left:1265px;top:127px;width:65px;height:17px;background:#c0dcc0"></div>
<div class="a" style="left:1331px;top:127px;width:65px;height:17px;background:#c0dcc0"></div>
<div class="a" style="left:1397px;top:127px;width:65px;height:17px;background:#c0dcc0"></div>
<div class="a" style="left:1463px;top:127px;width:65px;height:17px;background:#c0dcc0"></div>
<div class="a" style="left:1529px;top:127px;width:88px;height:17px;background:#f1c8a5"></div>
<div class="a" style="left:1618px;top:127px;width:80px;height:17px;background:#f1c8a5"></div>
<div class="a" style="left:1699px;top:127px;width:36px;height:17px;background:#f1c8a5"></div>
<div class="a" style="left:4px;top:108px;width:1731px;height:1px;background:#a0a0a0"></div>
<div class="a" style="left:4px;top:109px;width:1731px;height:1px;background:#fff"></div>
<div class="a" style="left:4px;top:144px;width:1731px;height:1px;background:#808080"></div>
<div class="a" style="left:583px;top:126px;width:1152px;height:1px;background:#808080"></div>
<div class="a" style="left:584px;top:127px;width:1151px;height:1px;background:rgba(255,255,255,.7)"></div>
<div class="a" style="left:4px;top:108px;width:1px;height:36px;background:#a0a0a0"></div>
<div class="a" style="left:5px;top:109px;width:1px;height:35px;background:#fff"></div>
<div class="a" style="left:16px;top:108px;width:1px;height:36px;background:#808080"></div>
<div class="a" style="left:17px;top:109px;width:1px;height:35px;background:#fff"></div>
<div class="a" style="left:48px;top:108px;width:1px;height:36px;background:#808080"></div>
<div class="a" style="left:49px;top:109px;width:1px;height:35px;background:#fff"></div>
<div class="a" style="left:117px;top:108px;width:1px;height:36px;background:#808080"></div>
<div class="a" style="left:118px;top:109px;width:1px;height:35px;background:#fff"></div>
<div class="a" style="left:155px;top:108px;width:1px;height:36px;background:#808080"></div>
<div class="a" style="left:156px;top:109px;width:1px;height:35px;background:#fff"></div>
<div class="a" style="left:209px;top:108px;width:1px;height:36px;background:#808080"></div>
<div class="a" style="left:210px;top:109px;width:1px;height:35px;background:#fff"></div>
<div class="a" style="left:285px;top:108px;width:1px;height:36px;background:#808080"></div>
<div class="a" style="left:286px;top:109px;width:1px;height:35px;background:#fff"></div>
<div class="a" style="left:516px;top:108px;width:1px;height:36px;background:#808080"></div>
<div class="a" style="left:517px;top:109px;width:1px;height:35px;background:#fff"></div>
<div class="a" style="left:583px;top:108px;width:1px;height:36px;background:#808080"></div>
<div class="a" style="left:584px;top:109px;width:1px;height:18px;background:#fff"></div>
<div class="a" style="left:583px;top:126px;width:1px;height:18px;background:#808080"></div>
<div class="a" style="left:584px;top:127px;width:1px;height:17px;background:#fff"></div>
<div class="a" style="left:664px;top:126px;width:1px;height:18px;background:#808080"></div>
<div class="a" style="left:665px;top:127px;width:1px;height:17px;background:#fff"></div>
<div class="a" style="left:752px;top:108px;width:1px;height:36px;background:#808080"></div>
<div class="a" style="left:753px;top:109px;width:1px;height:18px;background:#fff"></div>
<div class="a" style="left:752px;top:126px;width:1px;height:18px;background:#808080"></div>
<div class="a" style="left:753px;top:127px;width:1px;height:17px;background:#fff"></div>
<div class="a" style="left:841px;top:126px;width:1px;height:18px;background:#808080"></div>
<div class="a" style="left:842px;top:127px;width:1px;height:17px;background:#fff"></div>
<div class="a" style="left:934px;top:126px;width:1px;height:18px;background:#808080"></div>
<div class="a" style="left:935px;top:127px;width:1px;height:17px;background:#fff"></div>
<div class="a" style="left:1000px;top:126px;width:1px;height:18px;background:#808080"></div>
<div class="a" style="left:1001px;top:127px;width:1px;height:17px;background:#fff"></div>
<div class="a" style="left:1066px;top:126px;width:1px;height:18px;background:#808080"></div>
<div class="a" style="left:1067px;top:127px;width:1px;height:17px;background:#fff"></div>
<div class="a" style="left:1132px;top:126px;width:1px;height:18px;background:#808080"></div>
<div class="a" style="left:1133px;top:127px;width:1px;height:17px;background:#fff"></div>
<div class="a" style="left:1198px;top:126px;width:1px;height:18px;background:#808080"></div>
<div class="a" style="left:1199px;top:127px;width:1px;height:17px;background:#fff"></div>
<div class="a" style="left:1264px;top:126px;width:1px;height:18px;background:#808080"></div>
<div class="a" style="left:1265px;top:127px;width:1px;height:17px;background:#fff"></div>
<div class="a" style="left:1330px;top:126px;width:1px;height:18px;background:#808080"></div>
<div class="a" style="left:1331px;top:127px;width:1px;height:17px;background:#fff"></div>
<div class="a" style="left:1396px;top:126px;width:1px;height:18px;background:#808080"></div>
<div class="a" style="left:1397px;top:127px;width:1px;height:17px;background:#fff"></div>
<div class="a" style="left:1462px;top:126px;width:1px;height:18px;background:#808080"></div>
<div class="a" style="left:1463px;top:127px;width:1px;height:17px;background:#fff"></div>
<div class="a" style="left:1528px;top:126px;width:1px;height:18px;background:#808080"></div>
<div class="a" style="left:1529px;top:127px;width:1px;height:17px;background:#fff"></div>
<div class="a" style="left:1617px;top:126px;width:1px;height:18px;background:#808080"></div>
<div class="a" style="left:1618px;top:127px;width:1px;height:17px;background:#fff"></div>
<div class="a" style="left:1698px;top:126px;width:1px;height:18px;background:#808080"></div>
<div class="a" style="left:1699px;top:127px;width:1px;height:17px;background:#fff"></div>
<div class="t g" style="left:20px;top:121px;">Тип</div>
<div class="t g" style="left:51px;top:121px;">Утверждено</div>
<div class="t g" style="left:120px;top:121px;font-weight:bold;letter-spacing:1px">№п/п</div>
<div class="t g" style="left:158px;top:114px;">Связь с</div>
<div class="t g" style="left:158px;top:127px;">ВОР</div>
<div class="t g" style="left:212px;top:121px;">Обоснование</div>
<div class="t g" style="left:288px;top:121px;">Наименование</div>
<div class="t g" style="left:519px;top:114px;">Ед.изм.</div>
<div class="t g" style="left:519px;top:127px;">(краткая)</div>
<div class="t g" style="left:586px;top:112px;">Количество</div>
<div class="t g" style="left:755px;top:112px;">Базовый уровень цен</div>
<div class="t g" style="left:586px;top:130px;">Всего с коэф.</div>
<div class="t g" style="left:667px;top:130px;">Норма расхода</div>
<div class="t g" style="left:755px;top:130px;">Всего</div>
<div class="t g" style="left:844px;top:130px;">ПЗ</div>
<div class="t g" style="left:937px;top:130px;">ОЗП</div>
<div class="t g" style="left:1003px;top:130px;">ЭММ</div>
<div class="t g" style="left:1069px;top:130px;">ЗПМ</div>
<div class="t g" style="left:1135px;top:130px;">СтМат</div>
<div class="t g" style="left:1201px;top:130px;">Прочие</div>
<div class="t g" style="left:1267px;top:130px;">НР</div>
<div class="t g" style="left:1333px;top:130px;">СП</div>
<div class="t g" style="left:1399px;top:130px;">ТрудСтр</div>
<div class="t g" style="left:1465px;top:130px;">ТрудМаш</div>
<div class="t g" style="left:1531px;top:130px;">Всего</div>
<div class="t g" style="left:1620px;top:130px;">ПЗ</div>
<div class="t g" style="left:1701px;top:130px;">ОЗП</div>
<div class="a" style="left:16px;top:145px;width:1719px;height:29px;background:#eaeafc"></div>
<div class="a" style="left:5px;top:145px;width:11px;height:29px;background:#f0f0f0"></div>
<div class="a" style="left:4px;top:174px;width:205px;height:1px;background:#808080"></div>
<div class="a" style="left:209px;top:174px;width:1526px;height:1px;background:#c0c0c0"></div>
<div class="a" style="left:4px;top:144px;width:1px;height:31px;background:#a0a0a0"></div>
<div class="a" style="left:5px;top:145px;width:1px;height:29px;background:#fff"></div>
<div class="a" style="left:5px;top:145px;width:11px;height:1px;background:#fff"></div>
<div class="a" style="left:16px;top:144px;width:1px;height:31px;background:#808080"></div>
<div class="a" style="left:17px;top:145px;width:1px;height:29px;background:#fff"></div>
<div class="a" style="left:17px;top:145px;width:31px;height:1px;background:#fff"></div>
<div class="a" style="left:48px;top:144px;width:1px;height:31px;background:#808080"></div>
<div class="a" style="left:49px;top:145px;width:1px;height:29px;background:#fff"></div>
<div class="a" style="left:49px;top:145px;width:68px;height:1px;background:#fff"></div>
<div class="a" style="left:117px;top:144px;width:1px;height:31px;background:#808080"></div>
<div class="a" style="left:118px;top:145px;width:1px;height:29px;background:#fff"></div>
<div class="a" style="left:118px;top:145px;width:37px;height:1px;background:#fff"></div>
<div class="a" style="left:155px;top:144px;width:1px;height:31px;background:#808080"></div>
<div class="a" style="left:156px;top:145px;width:1px;height:29px;background:#fff"></div>
<div class="a" style="left:156px;top:145px;width:53px;height:1px;background:#fff"></div>
<div class="a" style="left:209px;top:144px;width:1px;height:31px;background:#808080"></div>
<div class="a" style="left:285px;top:145px;width:1px;height:30px;background:#c0c0c0"></div>
<div class="a" style="left:516px;top:145px;width:1px;height:30px;background:#c0c0c0"></div>
<div class="a" style="left:583px;top:145px;width:1px;height:30px;background:#c0c0c0"></div>
<div class="a" style="left:664px;top:145px;width:1px;height:30px;background:#c0c0c0"></div>
<div class="a" style="left:752px;top:145px;width:1px;height:30px;background:#c0c0c0"></div>
<div class="a" style="left:841px;top:145px;width:1px;height:30px;background:#c0c0c0"></div>
<div class="a" style="left:934px;top:145px;width:1px;height:30px;background:#c0c0c0"></div>
<div class="a" style="left:1000px;top:145px;width:1px;height:30px;background:#c0c0c0"></div>
<div class="a" style="left:1066px;top:145px;width:1px;height:30px;background:#c0c0c0"></div>
<div class="a" style="left:1132px;top:145px;width:1px;height:30px;background:#c0c0c0"></div>
<div class="a" style="left:1198px;top:145px;width:1px;height:30px;background:#c0c0c0"></div>
<div class="a" style="left:1264px;top:145px;width:1px;height:30px;background:#c0c0c0"></div>
<div class="a" style="left:1330px;top:145px;width:1px;height:30px;background:#c0c0c0"></div>
<div class="a" style="left:1396px;top:145px;width:1px;height:30px;background:#c0c0c0"></div>
<div class="a" style="left:1462px;top:145px;width:1px;height:30px;background:#c0c0c0"></div>
<div class="a" style="left:1528px;top:145px;width:1px;height:30px;background:#c0c0c0"></div>
<div class="a" style="left:1617px;top:145px;width:1px;height:30px;background:#c0c0c0"></div>
<div class="a" style="left:1698px;top:145px;width:1px;height:30px;background:#c0c0c0"></div>
<div class="a" style="left:78px;top:154px;width:11px;height:11px;background:#fff;border:1px solid #a0a0a0"></div>
<div class="t g" style="left:121px;top:147px;color:#0000ff">ЛС1</div>
<div class="t g" style="left:212px;top:147px;width:72px;overflow:hidden;color:#0000ff;font-weight:bold;letter-spacing:0.6px;top:146px">ЛС-02...</div>
<svg class="a" style="left:260px;top:145px" width="24" height="23" viewBox="0 0 24 23"><path d="M1 13 L14 2.5 L24 0 L20 6 L10 16Z" fill="#4cc878"/><path d="M14 2.5 L24 0 L23 2 L15 4Z" fill="#8ee0a8"/><path d="M20 6 L24 3 L24 7 L16 21 L10 16Z" fill="#fff"/><path d="M1 13 L10 16 L16 21 L16 22 L1 15Z" fill="#8aaed8"/><path d="M16 21 L24 7" stroke="#7aa0d0" stroke-width="1"/><path d="M1 13 L1 15" stroke="#2a7a50" stroke-width="1"/><text x="11" y="16" font-size="6" font-weight="bold" font-family="Liberation Sans" transform="rotate(30 14 14)" fill="#111">ЛС</text></svg>
<div class="t g" style="left:288px;top:147px;color:#0000ff;font-weight:bold;font-size:13px;letter-spacing:0.45px;top:148px">Новая локальная смета</div>
<div class="a" style="left:16px;top:175px;width:1719px;height:29px;background:#ffffff"></div>
<div class="a" style="left:5px;top:175px;width:11px;height:29px;background:#f0f0f0"></div>
<div class="a" style="left:4px;top:204px;width:205px;height:1px;background:#808080"></div>
<div class="a" style="left:209px;top:204px;width:1526px;height:1px;background:#c0c0c0"></div>
<div class="a" style="left:4px;top:174px;width:1px;height:31px;background:#a0a0a0"></div>
<div class="a" style="left:5px;top:175px;width:1px;height:29px;background:#fff"></div>
<div class="a" style="left:5px;top:175px;width:11px;height:1px;background:#fff"></div>
<div class="a" style="left:16px;top:174px;width:1px;height:31px;background:#808080"></div>
<div class="a" style="left:17px;top:175px;width:1px;height:29px;background:#fff"></div>
<div class="a" style="left:17px;top:175px;width:31px;height:1px;background:#fff"></div>
<div class="a" style="left:48px;top:174px;width:1px;height:31px;background:#808080"></div>
<div class="a" style="left:49px;top:175px;width:1px;height:29px;background:#fff"></div>
<div class="a" style="left:49px;top:175px;width:68px;height:1px;background:#fff"></div>
<div class="a" style="left:117px;top:174px;width:1px;height:31px;background:#808080"></div>
<div class="a" style="left:118px;top:175px;width:1px;height:29px;background:#fff"></div>
<div class="a" style="left:118px;top:175px;width:37px;height:1px;background:#fff"></div>
<div class="a" style="left:155px;top:174px;width:1px;height:31px;background:#808080"></div>
<div class="a" style="left:156px;top:175px;width:1px;height:29px;background:#fff"></div>
<div class="a" style="left:156px;top:175px;width:53px;height:1px;background:#fff"></div>
<div class="a" style="left:209px;top:174px;width:1px;height:31px;background:#808080"></div>
<div class="a" style="left:285px;top:175px;width:1px;height:30px;background:#c0c0c0"></div>
<div class="a" style="left:516px;top:175px;width:1px;height:30px;background:#c0c0c0"></div>
<div class="a" style="left:583px;top:175px;width:1px;height:30px;background:#c0c0c0"></div>
<div class="a" style="left:664px;top:175px;width:1px;height:30px;background:#c0c0c0"></div>
<div class="a" style="left:752px;top:175px;width:1px;height:30px;background:#c0c0c0"></div>
<div class="a" style="left:841px;top:175px;width:1px;height:30px;background:#c0c0c0"></div>
<div class="a" style="left:934px;top:175px;width:1px;height:30px;background:#c0c0c0"></div>
<div class="a" style="left:1000px;top:175px;width:1px;height:30px;background:#c0c0c0"></div>
<div class="a" style="left:1066px;top:175px;width:1px;height:30px;background:#c0c0c0"></div>
<div class="a" style="left:1132px;top:175px;width:1px;height:30px;background:#c0c0c0"></div>
<div class="a" style="left:1198px;top:175px;width:1px;height:30px;background:#c0c0c0"></div>
<div class="a" style="left:1264px;top:175px;width:1px;height:30px;background:#c0c0c0"></div>
<div class="a" style="left:1330px;top:175px;width:1px;height:30px;background:#c0c0c0"></div>
<div class="a" style="left:1396px;top:175px;width:1px;height:30px;background:#c0c0c0"></div>
<div class="a" style="left:1462px;top:175px;width:1px;height:30px;background:#c0c0c0"></div>
<div class="a" style="left:1528px;top:175px;width:1px;height:30px;background:#c0c0c0"></div>
<div class="a" style="left:1617px;top:175px;width:1px;height:30px;background:#c0c0c0"></div>
<div class="a" style="left:1698px;top:175px;width:1px;height:30px;background:#c0c0c0"></div>
<div class="a" style="left:78px;top:184px;width:11px;height:11px;background:#fff;border:1px solid #a0a0a0"></div>
<div class="t g" style="left:121px;top:177px;">1</div>
<div class="t g" style="left:212px;top:177px;width:72px;overflow:hidden;">11-01-002-06</div>
<svg class="a" style="left:273px;top:190px" width="7" height="12" viewBox="0 0 7 12"><path d="M1.5 10 V1.8 Q1.5 0.5 3 0.5 Q4.5 0.5 4.5 1.8 V10" stroke="#505050" stroke-width="1.1" fill="none"/><path d="M2.3 4.5 V10.3 Q2.3 11.5 4 11.5 Q6 11.5 6 10.3 V4.5" stroke="#505050" stroke-width="1.4" fill="none"/></svg>
<div class="t g" style="left:288px;top:177px;">Устройство подстилающих слоев:</div>
<div class="t g" style="left:288px;top:190px;">глинобитных с масляниcтыми добавками</div>
<div class="t g" style="left:519px;top:177px;">м3</div>
<div class="t g" style="left:586px;top:177px;">5</div>
<div class="t g" style="left:752px;top:177px;width:87px;text-align:right">9 250,91</div>
<div class="t g" style="left:841px;top:177px;width:91px;text-align:right">5 498,03</div>
<div class="t g" style="left:934px;top:177px;width:64px;text-align:right">0</div>
<div class="t g" style="left:1000px;top:177px;width:64px;text-align:right">1 767,33</div>
<div class="t g" style="left:1066px;top:177px;width:64px;text-align:right">2 120,27</div>
<div class="t g" style="left:1132px;top:177px;width:64px;text-align:right">1 610,43</div>
<div class="t g" style="left:1198px;top:177px;width:64px;text-align:right">0</div>
<div class="t g" style="left:1264px;top:177px;width:64px;text-align:right">2 374,7</div>
<div class="t g" style="left:1330px;top:177px;width:64px;text-align:right">1 378,18</div>
<div class="t g" style="left:1396px;top:177px;width:64px;text-align:right">0</div>
<div class="t g" style="left:1462px;top:177px;width:64px;text-align:right">6,25</div>
<div class="t g" style="left:1528px;top:177px;width:87px;text-align:right">2 539,5</div>
<div class="t g" style="left:1617px;top:177px;width:79px;text-align:right">2 539,5</div>
<div class="a" style="left:16px;top:205px;width:1719px;height:29px;background:#feeaea"></div>
<div class="a" style="left:5px;top:205px;width:11px;height:29px;background:#f0f0f0"></div>
<div class="a" style="left:4px;top:234px;width:205px;height:1px;background:#808080"></div>
<div class="a" style="left:209px;top:234px;width:1526px;height:1px;background:#c0c0c0"></div>
<div class="a" style="left:4px;top:204px;width:1px;height:31px;background:#a0a0a0"></div>
<div class="a" style="left:5px;top:205px;width:1px;height:29px;background:#fff"></div>
<div class="a" style="left:5px;top:205px;width:11px;height:1px;background:#fff"></div>
<div class="a" style="left:16px;top:204px;width:1px;height:31px;background:#808080"></div>
<div class="a" style="left:17px;top:205px;width:1px;height:29px;background:#fff"></div>
<div class="a" style="left:17px;top:205px;width:31px;height:1px;background:#fff"></div>
<div class="a" style="left:48px;top:204px;width:1px;height:31px;background:#808080"></div>
<div class="a" style="left:49px;top:205px;width:1px;height:29px;background:#fff"></div>
<div class="a" style="left:49px;top:205px;width:68px;height:1px;background:#fff"></div>
<div class="a" style="left:117px;top:204px;width:1px;height:31px;background:#808080"></div>
<div class="a" style="left:118px;top:205px;width:1px;height:29px;background:#fff"></div>
<div class="a" style="left:118px;top:205px;width:37px;height:1px;background:#fff"></div>
<div class="a" style="left:155px;top:204px;width:1px;height:31px;background:#808080"></div>
<div class="a" style="left:156px;top:205px;width:1px;height:29px;background:#fff"></div>
<div class="a" style="left:156px;top:205px;width:53px;height:1px;background:#fff"></div>
<div class="a" style="left:209px;top:204px;width:1px;height:31px;background:#808080"></div>
<div class="a" style="left:285px;top:205px;width:1px;height:30px;background:#c0c0c0"></div>
<div class="a" style="left:516px;top:205px;width:1px;height:30px;background:#c0c0c0"></div>
<div class="a" style="left:583px;top:205px;width:1px;height:30px;background:#c0c0c0"></div>
<div class="a" style="left:664px;top:205px;width:1px;height:30px;background:#c0c0c0"></div>
<div class="a" style="left:752px;top:205px;width:1px;height:30px;background:#c0c0c0"></div>
<div class="a" style="left:841px;top:205px;width:1px;height:30px;background:#c0c0c0"></div>
<div class="a" style="left:934px;top:205px;width:1px;height:30px;background:#c0c0c0"></div>
<div class="a" style="left:1000px;top:205px;width:1px;height:30px;background:#c0c0c0"></div>
<div class="a" style="left:1066px;top:205px;width:1px;height:30px;background:#c0c0c0"></div>
<div class="a" style="left:1132px;top:205px;width:1px;height:30px;background:#c0c0c0"></div>
<div class="a" style="left:1198px;top:205px;width:1px;height:30px;background:#c0c0c0"></div>
<div class="a" style="left:1264px;top:205px;width:1px;height:30px;background:#c0c0c0"></div>
<div class="a" style="left:1330px;top:205px;width:1px;height:30px;background:#c0c0c0"></div>
<div class="a" style="left:1396px;top:205px;width:1px;height:30px;background:#c0c0c0"></div>
<div class="a" style="left:1462px;top:205px;width:1px;height:30px;background:#c0c0c0"></div>
<div class="a" style="left:1528px;top:205px;width:1px;height:30px;background:#c0c0c0"></div>
<div class="a" style="left:1617px;top:205px;width:1px;height:30px;background:#c0c0c0"></div>
<div class="a" style="left:1698px;top:205px;width:1px;height:30px;background:#c0c0c0"></div>
<svg class="a" style="left:24px;top:216px" width="16" height="8" viewBox="0 0 16 8"><g fill="#ee7a10"><rect x="0" y="4" width="5.5" height="3.2" rx="1.6"/><rect x="5.3" y="4" width="5.5" height="3.2" rx="1.6"/><rect x="10.5" y="4" width="5.5" height="3.2" rx="1.6"/><rect x="2.2" y="2" width="5.3" height="3" rx="1.5"/><rect x="7.5" y="2" width="5.3" height="3" rx="1.5"/><rect x="5" y="0" width="6" height="2.8" rx="1.4"/></g><g fill="#c85000" opacity=".6"><rect x="0.5" y="6.3" width="15" height="0.9"/></g></svg>
<div class="t g" style="left:121px;top:207px;">1,1</div>
<div class="t g" style="left:212px;top:207px;width:72px;overflow:hidden;">01.2.01.01</div>
<svg class="a" style="left:273px;top:220px" width="7" height="12" viewBox="0 0 7 12"><path d="M1.5 10 V1.8 Q1.5 0.5 3 0.5 Q4.5 0.5 4.5 1.8 V10" stroke="#505050" stroke-width="1.1" fill="none"/><path d="M2.3 4.5 V10.3 Q2.3 11.5 4 11.5 Q6 11.5 6 10.3 V4.5" stroke="#505050" stroke-width="1.4" fill="none"/></svg>
<div class="t g" style="left:288px;top:207px;">Битумы нефтяные дорожные</div>
<div class="t g" style="left:519px;top:207px;">т</div>
<div class="t g" style="left:586px;top:207px;">0,4</div>
<div class="t g" style="left:667px;top:207px;">0,08</div>
<div class="t g" style="left:752px;top:207px;width:89px;text-align:center">-</div>
<div class="t g" style="left:841px;top:207px;width:91px;text-align:right">0</div>
<div class="t g" style="left:934px;top:207px;width:64px;text-align:right">0</div>
<div class="t g" style="left:1000px;top:207px;width:64px;text-align:right">0</div>
<div class="t g" style="left:1066px;top:207px;width:64px;text-align:right">0</div>
<div class="t g" style="left:1132px;top:207px;width:64px;text-align:right">0</div>
<div class="t g" style="left:1198px;top:207px;width:64px;text-align:right">0</div>
<div class="t g" style="left:1264px;top:207px;width:64px;text-align:right">0</div>
<div class="t g" style="left:1330px;top:207px;width:64px;text-align:right">0</div>
<div class="t g" style="left:1396px;top:207px;width:64px;text-align:right">0</div>
<div class="t g" style="left:1462px;top:207px;width:64px;text-align:right">0</div>
<div class="t g" style="left:1528px;top:207px;width:87px;text-align:right">0</div>
<div class="t g" style="left:1617px;top:207px;width:79px;text-align:right">0</div>
<div class="a" style="left:16px;top:235px;width:1719px;height:29px;background:#feeaea"></div>
<div class="a" style="left:5px;top:235px;width:11px;height:29px;background:#f0f0f0"></div>
<div class="a" style="left:4px;top:264px;width:205px;height:1px;background:#808080"></div>
<div class="a" style="left:209px;top:264px;width:1526px;height:1px;background:#c0c0c0"></div>
<div class="a" style="left:4px;top:234px;width:1px;height:31px;background:#a0a0a0"></div>
<div class="a" style="left:5px;top:235px;width:1px;height:29px;background:#fff"></div>
<div class="a" style="left:5px;top:235px;width:11px;height:1px;background:#fff"></div>
<div class="a" style="left:16px;top:234px;width:1px;height:31px;background:#808080"></div>
<div class="a" style="left:17px;top:235px;width:1px;height:29px;background:#fff"></div>
<div class="a" style="left:17px;top:235px;width:31px;height:1px;background:#fff"></div>
<div class="a" style="left:48px;top:234px;width:1px;height:31px;background:#808080"></div>
<div class="a" style="left:49px;top:235px;width:1px;height:29px;background:#fff"></div>
<div class="a" style="left:49px;top:235px;width:68px;height:1px;background:#fff"></div>
<div class="a" style="left:117px;top:234px;width:1px;height:31px;background:#808080"></div>
<div class="a" style="left:118px;top:235px;width:1px;height:29px;background:#fff"></div>
<div class="a" style="left:118px;top:235px;width:37px;height:1px;background:#fff"></div>
<div class="a" style="left:155px;top:234px;width:1px;height:31px;background:#808080"></div>
<div class="a" style="left:156px;top:235px;width:1px;height:29px;background:#fff"></div>
<div class="a" style="left:156px;top:235px;width:53px;height:1px;background:#fff"></div>
<div class="a" style="left:209px;top:234px;width:1px;height:31px;background:#808080"></div>
<div class="a" style="left:285px;top:235px;width:1px;height:30px;background:#c0c0c0"></div>
<div class="a" style="left:516px;top:235px;width:1px;height:30px;background:#c0c0c0"></div>
<div class="a" style="left:583px;top:235px;width:1px;height:30px;background:#c0c0c0"></div>
<div class="a" style="left:664px;top:235px;width:1px;height:30px;background:#c0c0c0"></div>
<div class="a" style="left:752px;top:235px;width:1px;height:30px;background:#c0c0c0"></div>
<div class="a" style="left:841px;top:235px;width:1px;height:30px;background:#c0c0c0"></div>
<div class="a" style="left:934px;top:235px;width:1px;height:30px;background:#c0c0c0"></div>
<div class="a" style="left:1000px;top:235px;width:1px;height:30px;background:#c0c0c0"></div>
<div class="a" style="left:1066px;top:235px;width:1px;height:30px;background:#c0c0c0"></div>
<div class="a" style="left:1132px;top:235px;width:1px;height:30px;background:#c0c0c0"></div>
<div class="a" style="left:1198px;top:235px;width:1px;height:30px;background:#c0c0c0"></div>
<div class="a" style="left:1264px;top:235px;width:1px;height:30px;background:#c0c0c0"></div>
<div class="a" style="left:1330px;top:235px;width:1px;height:30px;background:#c0c0c0"></div>
<div class="a" style="left:1396px;top:235px;width:1px;height:30px;background:#c0c0c0"></div>
<div class="a" style="left:1462px;top:235px;width:1px;height:30px;background:#c0c0c0"></div>
<div class="a" style="left:1528px;top:235px;width:1px;height:30px;background:#c0c0c0"></div>
<div class="a" style="left:1617px;top:235px;width:1px;height:30px;background:#c0c0c0"></div>
<div class="a" style="left:1698px;top:235px;width:1px;height:30px;background:#c0c0c0"></div>
<svg class="a" style="left:24px;top:246px" width="16" height="8" viewBox="0 0 16 8"><g fill="#ee7a10"><rect x="0" y="4" width="5.5" height="3.2" rx="1.6"/><rect x="5.3" y="4" width="5.5" height="3.2" rx="1.6"/><rect x="10.5" y="4" width="5.5" height="3.2" rx="1.6"/><rect x="2.2" y="2" width="5.3" height="3" rx="1.5"/><rect x="7.5" y="2" width="5.3" height="3" rx="1.5"/><rect x="5" y="0" width="6" height="2.8" rx="1.4"/></g><g fill="#c85000" opacity=".6"><rect x="0.5" y="6.3" width="15" height="0.9"/></g></svg>
<div class="t g" style="left:121px;top:237px;">1,2</div>
<div class="t g" style="left:212px;top:237px;width:72px;overflow:hidden;">02.3.01.02</div>
<svg class="a" style="left:273px;top:250px" width="7" height="12" viewBox="0 0 7 12"><path d="M1.5 10 V1.8 Q1.5 0.5 3 0.5 Q4.5 0.5 4.5 1.8 V10" stroke="#505050" stroke-width="1.1" fill="none"/><path d="M2.3 4.5 V10.3 Q2.3 11.5 4 11.5 Q6 11.5 6 10.3 V4.5" stroke="#505050" stroke-width="1.4" fill="none"/></svg>
<div class="t g" style="left:288px;top:237px;">Песок для строительных работ природный</div>
<div class="t g" style="left:519px;top:237px;">м3</div>
<div class="t g" style="left:586px;top:237px;">4,95</div>
<div class="t g" style="left:667px;top:237px;">0,99</div>
<div class="t g" style="left:752px;top:237px;width:89px;text-align:center">-</div>
<div class="t g" style="left:841px;top:237px;width:91px;text-align:right">0</div>
<div class="t g" style="left:934px;top:237px;width:64px;text-align:right">0</div>
<div class="t g" style="left:1000px;top:237px;width:64px;text-align:right">0</div>
<div class="t g" style="left:1066px;top:237px;width:64px;text-align:right">0</div>
<div class="t g" style="left:1132px;top:237px;width:64px;text-align:right">0</div>
<div class="t g" style="left:1198px;top:237px;width:64px;text-align:right">0</div>
<div class="t g" style="left:1264px;top:237px;width:64px;text-align:right">0</div>
<div class="t g" style="left:1330px;top:237px;width:64px;text-align:right">0</div>
<div class="t g" style="left:1396px;top:237px;width:64px;text-align:right">0</div>
<div class="t g" style="left:1462px;top:237px;width:64px;text-align:right">0</div>
<div class="t g" style="left:1528px;top:237px;width:87px;text-align:right">0</div>
<div class="t g" style="left:1617px;top:237px;width:79px;text-align:right">0</div>
<div class="a" style="left:16px;top:265px;width:1719px;height:29px;background:#ffffff"></div>
<div class="a" style="left:5px;top:265px;width:11px;height:29px;background:#f0f0f0"></div>
<div class="a" style="left:4px;top:294px;width:205px;height:1px;background:#808080"></div>
<div class="a" style="left:209px;top:294px;width:1526px;height:1px;background:#c0c0c0"></div>
<div class="a" style="left:4px;top:264px;width:1px;height:31px;background:#a0a0a0"></div>
<div class="a" style="left:5px;top:265px;width:1px;height:29px;background:#fff"></div>
<div class="a" style="left:5px;top:265px;width:11px;height:1px;background:#fff"></div>
<div class="a" style="left:16px;top:264px;width:1px;height:31px;background:#808080"></div>
<div class="a" style="left:17px;top:265px;width:1px;height:29px;background:#fff"></div>
<div class="a" style="left:17px;top:265px;width:31px;height:1px;background:#fff"></div>
<div class="a" style="left:48px;top:264px;width:1px;height:31px;background:#808080"></div>
<div class="a" style="left:49px;top:265px;width:1px;height:29px;background:#fff"></div>
<div class="a" style="left:49px;top:265px;width:68px;height:1px;background:#fff"></div>
<div class="a" style="left:117px;top:264px;width:1px;height:31px;background:#808080"></div>
<div class="a" style="left:118px;top:265px;width:1px;height:29px;background:#fff"></div>
<div class="a" style="left:118px;top:265px;width:37px;height:1px;background:#fff"></div>
<div class="a" style="left:155px;top:264px;width:1px;height:31px;background:#808080"></div>
<div class="a" style="left:156px;top:265px;width:1px;height:29px;background:#fff"></div>
<div class="a" style="left:156px;top:265px;width:53px;height:1px;background:#fff"></div>
<div class="a" style="left:209px;top:264px;width:1px;height:31px;background:#808080"></div>
<div class="a" style="left:285px;top:265px;width:1px;height:30px;background:#c0c0c0"></div>
<div class="a" style="left:516px;top:265px;width:1px;height:30px;background:#c0c0c0"></div>
<div class="a" style="left:583px;top:265px;width:1px;height:30px;background:#c0c0c0"></div>
<div class="a" style="left:664px;top:265px;width:1px;height:30px;background:#c0c0c0"></div>
<div class="a" style="left:752px;top:265px;width:1px;height:30px;background:#c0c0c0"></div>
<div class="a" style="left:841px;top:265px;width:1px;height:30px;background:#c0c0c0"></div>
<div class="a" style="left:934px;top:265px;width:1px;height:30px;background:#c0c0c0"></div>
<div class="a" style="left:1000px;top:265px;width:1px;height:30px;background:#c0c0c0"></div>
<div class="a" style="left:1066px;top:265px;width:1px;height:30px;background:#c0c0c0"></div>
<div class="a" style="left:1132px;top:265px;width:1px;height:30px;background:#c0c0c0"></div>
<div class="a" style="left:1198px;top:265px;width:1px;height:30px;background:#c0c0c0"></div>
<div class="a" style="left:1264px;top:265px;width:1px;height:30px;background:#c0c0c0"></div>
<div class="a" style="left:1330px;top:265px;width:1px;height:30px;background:#c0c0c0"></div>
<div class="a" style="left:1396px;top:265px;width:1px;height:30px;background:#c0c0c0"></div>
<div class="a" style="left:1462px;top:265px;width:1px;height:30px;background:#c0c0c0"></div>
<div class="a" style="left:1528px;top:265px;width:1px;height:30px;background:#c0c0c0"></div>
<div class="a" style="left:1617px;top:265px;width:1px;height:30px;background:#c0c0c0"></div>
<div class="a" style="left:1698px;top:265px;width:1px;height:30px;background:#c0c0c0"></div>
<div class="a" style="left:78px;top:274px;width:11px;height:11px;background:#fff;border:1px solid #a0a0a0"></div>
<div class="t g" style="left:121px;top:267px;">2</div>
<div class="t g" style="left:212px;top:267px;width:72px;overflow:hidden;">07-01-001-01</div>
<svg class="a" style="left:273px;top:280px" width="7" height="12" viewBox="0 0 7 12"><path d="M1.5 10 V1.8 Q1.5 0.5 3 0.5 Q4.5 0.5 4.5 1.8 V10" stroke="#505050" stroke-width="1.1" fill="none"/><path d="M2.3 4.5 V10.3 Q2.3 11.5 4 11.5 Q6 11.5 6 10.3 V4.5" stroke="#505050" stroke-width="1.4" fill="none"/></svg>
<div class="t g" style="left:288px;top:267px;">Укладка блоков и плит ленточных</div>
<div class="t g" style="left:288px;top:280px;">фундаментов при глубине котлована до 4 м,</div>
<div class="t g" style="left:519px;top:267px;">100 ШТ</div>
<div class="t g" style="left:586px;top:267px;">0,03</div>
<svg class="a" style="left:657px;top:265px" width="7" height="7" viewBox="0 0 7 7"><path d="M0 0 H7 V7Z" fill="#20b020"/></svg>
<div class="t g" style="left:752px;top:267px;width:87px;text-align:right">43 142,02</div>
<div class="t g" style="left:841px;top:267px;width:91px;text-align:right">1 520,08</div>
<div class="t g" style="left:934px;top:267px;width:64px;text-align:right">0</div>
<div class="t g" style="left:1000px;top:267px;width:64px;text-align:right">1 193,9</div>
<div class="t g" style="left:1066px;top:267px;width:64px;text-align:right">326,18</div>
<div class="t g" style="left:1132px;top:267px;width:64px;text-align:right">0</div>
<div class="t g" style="left:1198px;top:267px;width:64px;text-align:right">0</div>
<div class="t g" style="left:1264px;top:267px;width:64px;text-align:right">358,8</div>
<div class="t g" style="left:1330px;top:267px;width:64px;text-align:right">238,11</div>
<div class="t g" style="left:1396px;top:267px;width:64px;text-align:right">0</div>
<div class="t g" style="left:1462px;top:267px;width:64px;text-align:right">0,7383</div>
<div class="t g" style="left:1528px;top:267px;width:87px;text-align:right">3 707,34</div>
<div class="t g" style="left:1617px;top:267px;width:79px;text-align:right">3 707,34</div>
<div class="a" style="left:16px;top:295px;width:1719px;height:29px;background:#feeaea"></div>
<div class="a" style="left:5px;top:295px;width:11px;height:29px;background:#f0f0f0"></div>
<div class="a" style="left:4px;top:324px;width:205px;height:1px;background:#808080"></div>
<div class="a" style="left:209px;top:324px;width:1526px;height:1px;background:#c0c0c0"></div>
<div class="a" style="left:4px;top:294px;width:1px;height:31px;background:#a0a0a0"></div>
<div class="a" style="left:5px;top:295px;width:1px;height:29px;background:#fff"></div>
<div class="a" style="left:5px;top:295px;width:11px;height:1px;background:#fff"></div>
<div class="a" style="left:16px;top:294px;width:1px;height:31px;background:#808080"></div>
<div class="a" style="left:17px;top:295px;width:1px;height:29px;background:#fff"></div>
<div class="a" style="left:17px;top:295px;width:31px;height:1px;background:#fff"></div>
<div class="a" style="left:48px;top:294px;width:1px;height:31px;background:#808080"></div>
<div class="a" style="left:49px;top:295px;width:1px;height:29px;background:#fff"></div>
<div class="a" style="left:49px;top:295px;width:68px;height:1px;background:#fff"></div>
<div class="a" style="left:117px;top:294px;width:1px;height:31px;background:#808080"></div>
<div class="a" style="left:118px;top:295px;width:1px;height:29px;background:#fff"></div>
<div class="a" style="left:118px;top:295px;width:37px;height:1px;background:#fff"></div>
<div class="a" style="left:155px;top:294px;width:1px;height:31px;background:#808080"></div>
<div class="a" style="left:156px;top:295px;width:1px;height:29px;background:#fff"></div>
<div class="a" style="left:156px;top:295px;width:53px;height:1px;background:#fff"></div>
<div class="a" style="left:209px;top:294px;width:1px;height:31px;background:#808080"></div>
<div class="a" style="left:285px;top:295px;width:1px;height:30px;background:#c0c0c0"></div>
<div class="a" style="left:516px;top:295px;width:1px;height:30px;background:#c0c0c0"></div>
<div class="a" style="left:583px;top:295px;width:1px;height:30px;background:#c0c0c0"></div>
<div class="a" style="left:664px;top:295px;width:1px;height:30px;background:#c0c0c0"></div>
<div class="a" style="left:752px;top:295px;width:1px;height:30px;background:#c0c0c0"></div>
<div class="a" style="left:841px;top:295px;width:1px;height:30px;background:#c0c0c0"></div>
<div class="a" style="left:934px;top:295px;width:1px;height:30px;background:#c0c0c0"></div>
<div class="a" style="left:1000px;top:295px;width:1px;height:30px;background:#c0c0c0"></div>
<div class="a" style="left:1066px;top:295px;width:1px;height:30px;background:#c0c0c0"></div>
<div class="a" style="left:1132px;top:295px;width:1px;height:30px;background:#c0c0c0"></div>
<div class="a" style="left:1198px;top:295px;width:1px;height:30px;background:#c0c0c0"></div>
<div class="a" style="left:1264px;top:295px;width:1px;height:30px;background:#c0c0c0"></div>
<div class="a" style="left:1330px;top:295px;width:1px;height:30px;background:#c0c0c0"></div>
<div class="a" style="left:1396px;top:295px;width:1px;height:30px;background:#c0c0c0"></div>
<div class="a" style="left:1462px;top:295px;width:1px;height:30px;background:#c0c0c0"></div>
<div class="a" style="left:1528px;top:295px;width:1px;height:30px;background:#c0c0c0"></div>
<div class="a" style="left:1617px;top:295px;width:1px;height:30px;background:#c0c0c0"></div>
<div class="a" style="left:1698px;top:295px;width:1px;height:30px;background:#c0c0c0"></div>
<svg class="a" style="left:24px;top:306px" width="16" height="8" viewBox="0 0 16 8"><g fill="#ee7a10"><rect x="0" y="4" width="5.5" height="3.2" rx="1.6"/><rect x="5.3" y="4" width="5.5" height="3.2" rx="1.6"/><rect x="10.5" y="4" width="5.5" height="3.2" rx="1.6"/><rect x="2.2" y="2" width="5.3" height="3" rx="1.5"/><rect x="7.5" y="2" width="5.3" height="3" rx="1.5"/><rect x="5" y="0" width="6" height="2.8" rx="1.4"/></g><g fill="#c85000" opacity=".6"><rect x="0.5" y="6.3" width="15" height="0.9"/></g></svg>
<div class="t g" style="left:121px;top:297px;">2,1</div>
<div class="t g" style="left:212px;top:297px;width:72px;overflow:hidden;">02.3.01.02-112</div>
<svg class="a" style="left:273px;top:310px" width="7" height="12" viewBox="0 0 7 12"><path d="M1.5 10 V1.8 Q1.5 0.5 3 0.5 Q4.5 0.5 4.5 1.8 V10" stroke="#505050" stroke-width="1.1" fill="none"/><path d="M2.3 4.5 V10.3 Q2.3 11.5 4 11.5 Q6 11.5 6 10.3 V4.5" stroke="#505050" stroke-width="1.4" fill="none"/></svg>
<div class="t g" style="left:288px;top:297px;">Песок природный для строительных работ</div>
<div class="t g" style="left:288px;top:310px;">II класс, крупный</div>
<div class="t g" style="left:519px;top:297px;">м3</div>
<div class="t g" style="left:586px;top:297px;">0,288</div>
<div class="t g" style="left:667px;top:297px;">9,6</div>
<div class="t g" style="left:752px;top:297px;width:89px;text-align:center">-</div>
<div class="t g" style="left:841px;top:297px;width:91px;text-align:right">262,53</div>
<div class="t g" style="left:934px;top:297px;width:64px;text-align:right">0</div>
<div class="t g" style="left:1000px;top:297px;width:64px;text-align:right">0</div>
<div class="t g" style="left:1066px;top:297px;width:64px;text-align:right">0</div>
<div class="t g" style="left:1132px;top:297px;width:64px;text-align:right">262,53</div>
<div class="t g" style="left:1198px;top:297px;width:64px;text-align:right">0</div>
<div class="t g" style="left:1264px;top:297px;width:64px;text-align:right">0</div>
<div class="t g" style="left:1330px;top:297px;width:64px;text-align:right">0</div>
<div class="t g" style="left:1396px;top:297px;width:64px;text-align:right">0</div>
<div class="t g" style="left:1462px;top:297px;width:64px;text-align:right">0</div>
<div class="t g" style="left:1528px;top:297px;width:87px;text-align:right">911,57</div>
<div class="t g" style="left:1617px;top:297px;width:79px;text-align:right">911,57</div>
<div class="a" style="left:16px;top:325px;width:1719px;height:29px;background:#feeaea"></div>
<div class="a" style="left:5px;top:325px;width:11px;height:29px;background:#f0f0f0"></div>
<div class="a" style="left:4px;top:354px;width:205px;height:1px;background:#808080"></div>
<div class="a" style="left:209px;top:354px;width:1526px;height:1px;background:#c0c0c0"></div>
<div class="a" style="left:4px;top:324px;width:1px;height:31px;background:#a0a0a0"></div>
<div class="a" style="left:5px;top:325px;width:1px;height:29px;background:#fff"></div>
<div class="a" style="left:5px;top:325px;width:11px;height:1px;background:#fff"></div>
<div class="a" style="left:16px;top:324px;width:1px;height:31px;background:#808080"></div>
<div class="a" style="left:17px;top:325px;width:1px;height:29px;background:#fff"></div>
<div class="a" style="left:17px;top:325px;width:31px;height:1px;background:#fff"></div>
<div class="a" style="left:48px;top:324px;width:1px;height:31px;background:#808080"></div>
<div class="a" style="left:49px;top:325px;width:1px;height:29px;background:#fff"></div>
<div class="a" style="left:49px;top:325px;width:68px;height:1px;background:#fff"></div>
<div class="a" style="left:117px;top:324px;width:1px;height:31px;background:#808080"></div>
<div class="a" style="left:118px;top:325px;width:1px;height:29px;background:#fff"></div>
<div class="a" style="left:118px;top:325px;width:37px;height:1px;background:#fff"></div>
<div class="a" style="left:155px;top:324px;width:1px;height:31px;background:#808080"></div>
<div class="a" style="left:156px;top:325px;width:1px;height:29px;background:#fff"></div>
<div class="a" style="left:156px;top:325px;width:53px;height:1px;background:#fff"></div>
<div class="a" style="left:209px;top:324px;width:1px;height:31px;background:#808080"></div>
<div class="a" style="left:285px;top:325px;width:1px;height:30px;background:#c0c0c0"></div>
<div class="a" style="left:516px;top:325px;width:1px;height:30px;background:#c0c0c0"></div>
<div class="a" style="left:583px;top:325px;width:1px;height:30px;background:#c0c0c0"></div>
<div class="a" style="left:664px;top:325px;width:1px;height:30px;background:#c0c0c0"></div>
<div class="a" style="left:752px;top:325px;width:1px;height:30px;background:#c0c0c0"></div>
<div class="a" style="left:841px;top:325px;width:1px;height:30px;background:#c0c0c0"></div>
<div class="a" style="left:934px;top:325px;width:1px;height:30px;background:#c0c0c0"></div>
<div class="a" style="left:1000px;top:325px;width:1px;height:30px;background:#c0c0c0"></div>
<div class="a" style="left:1066px;top:325px;width:1px;height:30px;background:#c0c0c0"></div>
<div class="a" style="left:1132px;top:325px;width:1px;height:30px;background:#c0c0c0"></div>
<div class="a" style="left:1198px;top:325px;width:1px;height:30px;background:#c0c0c0"></div>
<div class="a" style="left:1264px;top:325px;width:1px;height:30px;background:#c0c0c0"></div>
<div class="a" style="left:1330px;top:325px;width:1px;height:30px;background:#c0c0c0"></div>
<div class="a" style="left:1396px;top:325px;width:1px;height:30px;background:#c0c0c0"></div>
<div class="a" style="left:1462px;top:325px;width:1px;height:30px;background:#c0c0c0"></div>
<div class="a" style="left:1528px;top:325px;width:1px;height:30px;background:#c0c0c0"></div>
<div class="a" style="left:1617px;top:325px;width:1px;height:30px;background:#c0c0c0"></div>
<div class="a" style="left:1698px;top:325px;width:1px;height:30px;background:#c0c0c0"></div>
<svg class="a" style="left:8px;top:333px" width="6" height="11" viewBox="0 0 6 11"><path d="M0 0 L5 5.5 L0 11Z" fill="#000"/></svg>
<svg class="a" style="left:24px;top:336px" width="16" height="8" viewBox="0 0 16 8"><g fill="#ee7a10"><rect x="0" y="4" width="5.5" height="3.2" rx="1.6"/><rect x="5.3" y="4" width="5.5" height="3.2" rx="1.6"/><rect x="10.5" y="4" width="5.5" height="3.2" rx="1.6"/><rect x="2.2" y="2" width="5.3" height="3" rx="1.5"/><rect x="7.5" y="2" width="5.3" height="3" rx="1.5"/><rect x="5" y="0" width="6" height="2.8" rx="1.4"/></g><g fill="#c85000" opacity=".6"><rect x="0.5" y="6.3" width="15" height="0.9"/></g></svg>
<div class="t g" style="left:121px;top:327px;">2,2</div>
<svg class="a" style="left:273px;top:340px" width="7" height="12" viewBox="0 0 7 12"><path d="M1.5 10 V1.8 Q1.5 0.5 3 0.5 Q4.5 0.5 4.5 1.8 V10" stroke="#505050" stroke-width="1.1" fill="none"/><path d="M2.3 4.5 V10.3 Q2.3 11.5 4 11.5 Q6 11.5 6 10.3 V4.5" stroke="#505050" stroke-width="1.4" fill="none"/></svg>
<div class="a" style="left:517px;top:325px;width:66px;height:29px;background:#0078d7;outline:1px dotted #f08000;outline-offset:-1px"></div>
<div class="t g" style="left:586px;top:327px;">0</div>
<div class="t g" style="left:667px;top:327px;">0</div>
<div class="t g" style="left:752px;top:327px;width:89px;text-align:center">-</div>
<div class="t g" style="left:841px;top:327px;width:91px;text-align:right">0</div>
<div class="t g" style="left:934px;top:327px;width:64px;text-align:right">0</div>
<div class="t g" style="left:1000px;top:327px;width:64px;text-align:right">0</div>
<div class="t g" style="left:1066px;top:327px;width:64px;text-align:right">0</div>
<div class="t g" style="left:1132px;top:327px;width:64px;text-align:right">0</div>
<div class="t g" style="left:1198px;top:327px;width:64px;text-align:right">0</div>
<div class="t g" style="left:1264px;top:327px;width:64px;text-align:right">0</div>
<div class="t g" style="left:1330px;top:327px;width:64px;text-align:right">0</div>
<div class="t g" style="left:1396px;top:327px;width:64px;text-align:right">0</div>
<div class="t g" style="left:1462px;top:327px;width:64px;text-align:right">0</div>
<div class="t g" style="left:1528px;top:327px;width:87px;text-align:right">0</div>
<div class="t g" style="left:1617px;top:327px;width:79px;text-align:right">0</div>
<div class="a" style="left:16px;top:355px;width:1719px;height:29px;background:#feeaea"></div>
<div class="a" style="left:5px;top:355px;width:11px;height:29px;background:#f0f0f0"></div>
<div class="a" style="left:4px;top:384px;width:205px;height:1px;background:#808080"></div>
<div class="a" style="left:209px;top:384px;width:1526px;height:1px;background:#c0c0c0"></div>
<div class="a" style="left:4px;top:354px;width:1px;height:31px;background:#a0a0a0"></div>
<div class="a" style="left:5px;top:355px;width:1px;height:29px;background:#fff"></div>
<div class="a" style="left:5px;top:355px;width:11px;height:1px;background:#fff"></div>
<div class="a" style="left:16px;top:354px;width:1px;height:31px;background:#808080"></div>
<div class="a" style="left:17px;top:355px;width:1px;height:29px;background:#fff"></div>
<div class="a" style="left:17px;top:355px;width:31px;height:1px;background:#fff"></div>
<div class="a" style="left:48px;top:354px;width:1px;height:31px;background:#808080"></div>
<div class="a" style="left:49px;top:355px;width:1px;height:29px;background:#fff"></div>
<div class="a" style="left:49px;top:355px;width:68px;height:1px;background:#fff"></div>
<div class="a" style="left:117px;top:354px;width:1px;height:31px;background:#808080"></div>
<div class="a" style="left:118px;top:355px;width:1px;height:29px;background:#fff"></div>
<div class="a" style="left:118px;top:355px;width:37px;height:1px;background:#fff"></div>
<div class="a" style="left:155px;top:354px;width:1px;height:31px;background:#808080"></div>
<div class="a" style="left:156px;top:355px;width:1px;height:29px;background:#fff"></div>
<div class="a" style="left:156px;top:355px;width:53px;height:1px;background:#fff"></div>
<div class="a" style="left:209px;top:354px;width:1px;height:31px;background:#808080"></div>
<div class="a" style="left:285px;top:355px;width:1px;height:30px;background:#c0c0c0"></div>
<div class="a" style="left:516px;top:355px;width:1px;height:30px;background:#c0c0c0"></div>
<div class="a" style="left:583px;top:355px;width:1px;height:30px;background:#c0c0c0"></div>
<div class="a" style="left:664px;top:355px;width:1px;height:30px;background:#c0c0c0"></div>
<div class="a" style="left:752px;top:355px;width:1px;height:30px;background:#c0c0c0"></div>
<div class="a" style="left:841px;top:355px;width:1px;height:30px;background:#c0c0c0"></div>
<div class="a" style="left:934px;top:355px;width:1px;height:30px;background:#c0c0c0"></div>
<div class="a" style="left:1000px;top:355px;width:1px;height:30px;background:#c0c0c0"></div>
<div class="a" style="left:1066px;top:355px;width:1px;height:30px;background:#c0c0c0"></div>
<div class="a" style="left:1132px;top:355px;width:1px;height:30px;background:#c0c0c0"></div>
<div class="a" style="left:1198px;top:355px;width:1px;height:30px;background:#c0c0c0"></div>
<div class="a" style="left:1264px;top:355px;width:1px;height:30px;background:#c0c0c0"></div>
<div class="a" style="left:1330px;top:355px;width:1px;height:30px;background:#c0c0c0"></div>
<div class="a" style="left:1396px;top:355px;width:1px;height:30px;background:#c0c0c0"></div>
<div class="a" style="left:1462px;top:355px;width:1px;height:30px;background:#c0c0c0"></div>
<div class="a" style="left:1528px;top:355px;width:1px;height:30px;background:#c0c0c0"></div>
<div class="a" style="left:1617px;top:355px;width:1px;height:30px;background:#c0c0c0"></div>
<div class="a" style="left:1698px;top:355px;width:1px;height:30px;background:#c0c0c0"></div>
<svg class="a" style="left:24px;top:366px" width="16" height="8" viewBox="0 0 16 8"><g fill="#ee7a10"><rect x="0" y="4" width="5.5" height="3.2" rx="1.6"/><rect x="5.3" y="4" width="5.5" height="3.2" rx="1.6"/><rect x="10.5" y="4" width="5.5" height="3.2" rx="1.6"/><rect x="2.2" y="2" width="5.3" height="3" rx="1.5"/><rect x="7.5" y="2" width="5.3" height="3" rx="1.5"/><rect x="5" y="0" width="6" height="2.8" rx="1.4"/></g><g fill="#c85000" opacity=".6"><rect x="0.5" y="6.3" width="15" height="0.9"/></g></svg>
<div class="t g" style="left:121px;top:357px;">2,3</div>
<div class="t g" style="left:212px;top:357px;width:72px;overflow:hidden;">05.1.05.04-0001</div>
<svg class="a" style="left:273px;top:370px" width="7" height="12" viewBox="0 0 7 12"><path d="M1.5 10 V1.8 Q1.5 0.5 3 0.5 Q4.5 0.5 4.5 1.8 V10" stroke="#505050" stroke-width="1.1" fill="none"/><path d="M2.3 4.5 V10.3 Q2.3 11.5 4 11.5 Q6 11.5 6 10.3 V4.5" stroke="#505050" stroke-width="1.4" fill="none"/></svg>
<div class="t g" style="left:288px;top:357px;">Плиты железобетонные ленточных</div>
<div class="t g" style="left:288px;top:370px;">фундаментов, объем до 2,4 м3, бетон В25,</div>
<div class="t g" style="left:519px;top:357px;">м3</div>
<div class="t g" style="left:586px;top:357px;">1</div>
<div class="t g" style="left:667px;top:357px;">1</div>
<div class="t g" style="left:752px;top:357px;width:87px;text-align:right">13 587,5</div>
<div class="t g" style="left:841px;top:357px;width:91px;text-align:right">40 762,5</div>
<div class="t g" style="left:934px;top:357px;width:64px;text-align:right">0</div>
<div class="t g" style="left:1000px;top:357px;width:64px;text-align:right">0</div>
<div class="t g" style="left:1066px;top:357px;width:64px;text-align:right">0</div>
<div class="t g" style="left:1132px;top:357px;width:64px;text-align:right">40 762,5</div>
<div class="t g" style="left:1198px;top:357px;width:64px;text-align:right">0</div>
<div class="t g" style="left:1264px;top:357px;width:64px;text-align:right">0</div>
<div class="t g" style="left:1330px;top:357px;width:64px;text-align:right">0</div>
<div class="t g" style="left:1396px;top:357px;width:64px;text-align:right">0</div>
<div class="t g" style="left:1462px;top:357px;width:64px;text-align:right">0</div>
<div class="t g" style="left:1528px;top:357px;width:87px;text-align:right">13 587,5</div>
<div class="t g" style="left:1617px;top:357px;width:79px;text-align:right">13 587,5</div>
<div class="a" style="left:1735px;top:109px;width:17px;height:956px;background:#f0f0f0"></div>
<div class="a" style="left:1752px;top:105px;width:3px;height:961px;background:#fafafa"></div>
<div class="a" style="left:1735px;top:108px;width:17px;height:1px;background:#a0a0a0"></div>
<div class="a" style="left:1736px;top:109px;width:16px;height:940px;background:#f0f0f0"></div>
<svg class="a" style="left:1739px;top:113px" width="10" height="8" viewBox="0 0 10 8"><path d="M1 6 L5 2 L9 6" stroke="#505050" stroke-width="2" fill="none"/></svg>
<div class="a" style="left:1736px;top:488px;width:15px;height:483px;background:#cdcdcd"></div>
<svg class="a" style="left:1739px;top:1036px" width="10" height="8" viewBox="0 0 10 8"><path d="M1 2 L5 6 L9 2" stroke="#505050" stroke-width="2" fill="none"/></svg>
<div class="a" style="left:5px;top:1049px;width:1730px;height:15px;background:#f0f0f0"></div>
<svg class="a" style="left:10px;top:1052px" width="8" height="10" viewBox="0 0 8 10"><path d="M6 1 L2 5 L6 9" stroke="#505050" stroke-width="2" fill="none"/></svg>
<div class="a" style="left:22px;top:1049px;width:17px;height:15px;background:#cdcdcd"></div>
<svg class="a" style="left:1723px;top:1052px" width="8" height="10" viewBox="0 0 8 10"><path d="M2 1 L6 5 L2 9" stroke="#505050" stroke-width="2" fill="none"/></svg>
<div class="a" style="left:4px;top:108px;width:1px;height:956px;background:#a0a0a0"></div>
<div class="a" style="left:4px;top:1065px;width:1752px;height:1px;background:#fff"></div>
<div class="a" style="left:1px;top:1065px;width:1755px;height:24px;background:#f0f0f0"></div>
<div class="a" style="left:2px;top:1086px;width:73px;height:2px;background:#6a6a6a;border-bottom-right-radius:2px"></div>
<div class="a" style="left:75px;top:1066px;width:1681px;height:2px;background:#6a6a6a"></div>
<div class="t g" style="left:9px;top:1073px;">Полный вид</div>
<div class="a" style="left:76px;top:1066px;width:106px;height:20px;background:#f0f0f0;border-top:2px solid #6a6a6a;border-left:1px solid #6a6a6a;border-right:2px solid #6a6a6a;border-bottom:2px solid #6a6a6a;border-bottom-right-radius:3px"></div>
<div class="a" style="left:77px;top:1068px;width:103px;height:1px;background:#fff"></div>
<div class="a" style="left:77px;top:1068px;width:1px;height:16px;background:#fff"></div>
<div class="t g" style="left:82px;top:1071px;">Сокращенный вид</div>
<div class="a" style="left:183px;top:1066px;width:68px;height:20px;background:#f0f0f0;border-top:2px solid #6a6a6a;border-left:1px solid #6a6a6a;border-right:2px solid #6a6a6a;border-bottom:2px solid #6a6a6a;border-bottom-right-radius:3px"></div>
<div class="a" style="left:184px;top:1068px;width:65px;height:1px;background:#fff"></div>
<div class="a" style="left:184px;top:1068px;width:1px;height:16px;background:#fff"></div>
<div class="t g" style="left:189px;top:1071px;">Вид строки</div>
<div class="a" style="left:252px;top:1066px;width:101px;height:20px;background:#f0f0f0;border-top:2px solid #6a6a6a;border-left:1px solid #6a6a6a;border-right:2px solid #6a6a6a;border-bottom:2px solid #6a6a6a;border-bottom-right-radius:3px"></div>
<div class="a" style="left:253px;top:1068px;width:98px;height:1px;background:#fff"></div>
<div class="a" style="left:253px;top:1068px;width:1px;height:16px;background:#fff"></div>
<div class="t g" style="left:258px;top:1071px;">Объектная смета</div>
<div class="a" style="left:354px;top:1066px;width:86px;height:20px;background:#f0f0f0;border-top:2px solid #6a6a6a;border-left:1px solid #6a6a6a;border-right:2px solid #6a6a6a;border-bottom:2px solid #6a6a6a;border-bottom-right-radius:3px"></div>
<div class="a" style="left:355px;top:1068px;width:83px;height:1px;background:#fff"></div>
<div class="a" style="left:355px;top:1068px;width:1px;height:16px;background:#fff"></div>
<div class="t g" style="left:360px;top:1071px;">Предпросмотр</div>
<div class="a" style="left:3px;top:1091px;width:85px;height:26px;border-top:1px solid #a0a0a0;border-left:1px solid #a0a0a0;border-right:1px solid #fff;border-bottom:1px solid #fff"></div>
<div class="a" style="left:92px;top:1091px;width:296px;height:26px;border-top:1px solid #a0a0a0;border-left:1px solid #a0a0a0;border-right:1px solid #fff;border-bottom:1px solid #fff"></div>
<div class="a" style="left:392px;top:1091px;width:1293px;height:26px;border-top:1px solid #a0a0a0;border-left:1px solid #a0a0a0;border-right:1px solid #fff;border-bottom:1px solid #fff"></div>
<div class="a" style="left:1690px;top:1091px;width:31px;height:26px;border-top:1px solid #a0a0a0;border-left:1px solid #a0a0a0;border-right:1px solid #fff;border-bottom:1px solid #fff"></div>
<div class="a" style="left:1724px;top:1091px;width:30px;height:26px;border-top:1px solid #a0a0a0;border-left:1px solid #a0a0a0;border-right:1px solid #fff;border-bottom:1px solid #fff"></div>
<div class="a" style="left:89px;top:1089px;width:1px;height:28px;background:#a0a0a0"></div>
<div class="a" style="left:90px;top:1089px;width:1px;height:28px;background:#fff"></div>
<div class="a" style="left:389px;top:1089px;width:1px;height:28px;background:#a0a0a0"></div>
<div class="a" style="left:390px;top:1089px;width:1px;height:28px;background:#fff"></div>
<div class="a" style="left:1687px;top:1089px;width:1px;height:28px;background:#a0a0a0"></div>
<div class="a" style="left:1688px;top:1089px;width:1px;height:28px;background:#fff"></div>
<div class="a" style="left:1721px;top:1089px;width:1px;height:28px;background:#a0a0a0"></div>
<div class="a" style="left:1722px;top:1089px;width:1px;height:28px;background:#fff"></div>
<div class="a" style="left:1755px;top:1089px;width:1px;height:28px;background:#a0a0a0"></div>
<div class="a" style="left:1756px;top:1089px;width:1px;height:28px;background:#fff"></div>
<div class="a" style="left:1px;top:1116px;width:1755px;height:1px;background:#fff"></div>
<div class="t m" style="left:397px;top:1098px;">ИТОГО (руб)</div>
<div class="t m" style="left:474px;top:1098px;letter-spacing:-0.38px">По ЛС: 52 392,93 / 214 831,42</div>
<div class="t m" style="left:642px;top:1098px;letter-spacing:-0.3px">По объекту: 52 392,93 / 214 831,42</div>
<svg class="a" style="left:1696px;top:1095px" width="18" height="18" viewBox="0 0 18 18"><circle cx="9" cy="9" r="8" fill="#a0a0a0"/><rect x="8" y="4" width="2.5" height="2.5" fill="#fff"/><rect x="8" y="8" width="2.5" height="6" fill="#fff"/><path d="M1.5 1.5 L16.5 16.5" stroke="#ff0000" stroke-width="1.8" stroke-linecap="round"/></svg>
<div class="t m" style="left:1730px;top:1098px;">RU</div>
<div class="a" style="left:524px;top:334px;width:341px;height:458px;background:#f0f0f0;border:1px solid #a0a0a0"></div>
<svg class="a" style="left:528px;top:339px" width="16" height="16" viewBox="0 0 16 16"><path d="M4 3 L13 13.5" stroke="#d08030" stroke-width="2"/><path d="M1 6 L6 1" stroke="#4a5a68" stroke-width="2.6"/><path d="M1 14.5 L4 11.5" stroke="#d08030" stroke-width="2"/><path d="M4 13.5 Q9 16 13 10" stroke="#a8bcc8" stroke-width="1.6" fill="none"/><rect x="9" y="0" width="7" height="7" rx="1" fill="#f58a12"/><circle cx="12.5" cy="3.5" r="1.6" fill="none" stroke="#fff" stroke-width="1"/><path d="M12.5 0.8 V1.6 M12.5 5.4 V6.2 M9.8 3.5 H10.6 M14.4 3.5 H15.2" stroke="#fff" stroke-width=".8"/></svg>
<div class="t m" style="left:549px;top:342px;color:#000">Добавить расценку</div>
<div class="t m" style="left:701px;top:342px;width:150px;text-align:right;color:#000">Shift+Ins</div>
<svg class="a" style="left:528px;top:360px" width="16" height="16" viewBox="0 0 16 16"><g fill="#ee7a10" stroke="#c05000" stroke-width=".5"><rect x="0" y="12" width="5.4" height="3" rx="1.5"/><rect x="5.3" y="12" width="5.4" height="3" rx="1.5"/><rect x="10.6" y="12" width="5.4" height="3" rx="1.5"/><rect x="2.6" y="10" width="5.4" height="3" rx="1.5"/><rect x="8" y="10" width="5.4" height="3" rx="1.5"/><rect x="5.3" y="8" width="5.4" height="3" rx="1.5"/></g><rect x="9" y="0" width="7" height="7" rx="1" fill="#f58a12"/><circle cx="12.5" cy="3.5" r="1.6" fill="none" stroke="#fff" stroke-width="1"/><path d="M12.5 0.8 V1.6 M12.5 5.4 V6.2 M9.8 3.5 H10.6 M14.4 3.5 H15.2" stroke="#fff" stroke-width=".8"/></svg>
<div class="t m" style="left:549px;top:363px;color:#000">Добавить ресурс</div>
<div class="t m" style="left:701px;top:363px;width:150px;text-align:right;color:#000">Ins</div>
<svg class="a" style="left:528px;top:381px" width="16" height="16" viewBox="0 0 16 16"><rect x="0.5" y="3.5" width="13" height="3.5" fill="#8cc890" stroke="#4a8a50" stroke-width="1"/><rect x="2" y="7" width="10" height="3.5" fill="#9cd4a0" stroke="#4a8a50" stroke-width=".8"/><rect x="2" y="10.5" width="10" height="5" fill="#fff8dc" stroke="#806040" stroke-width="1"/><rect x="5" y="12.5" width="3" height="1.2" fill="#105010"/><rect x="9" y="0" width="7" height="7" rx="1" fill="#f58a12"/><circle cx="12.5" cy="3.5" r="1.6" fill="none" stroke="#fff" stroke-width="1"/><path d="M12.5 0.8 V1.6 M12.5 5.4 V6.2 M9.8 3.5 H10.6 M14.4 3.5 H15.2" stroke="#fff" stroke-width=".8"/></svg>
<div class="t m" style="left:549px;top:384px;color:#000">Добавить подчиненную строку</div>
<div class="t m" style="left:701px;top:384px;width:150px;text-align:right;color:#000">Alt+Ins</div>
<svg class="a" style="left:528px;top:402px" width="16" height="16" viewBox="0 0 16 16"><path d="M1 3.5 H13 V11.5 H8 L5.5 14.5 V11.5 H1Z" fill="#e8f8fc" stroke="#9aa4ac" stroke-width="1"/><rect x="9" y="0" width="7" height="7" rx="1" fill="#f58a12"/><circle cx="12.5" cy="3.5" r="1.6" fill="none" stroke="#fff" stroke-width="1"/><path d="M12.5 0.8 V1.6 M12.5 5.4 V6.2 M9.8 3.5 H10.6 M14.4 3.5 H15.2" stroke="#fff" stroke-width=".8"/></svg>
<div class="t m" style="left:549px;top:405px;color:#000">Добавить строку-комментарий</div>
<div class="t m" style="left:701px;top:405px;width:150px;text-align:right;color:#000">Alt+R</div>
<svg class="a" style="left:528px;top:423px" width="16" height="16" viewBox="0 0 16 16"><rect x="5.5" y="3.5" width="10" height="8" fill="#e81818"/><path d="M0.5 6.5 H5.5 V11.5 H0.5Z" fill="#d8d8d8" stroke="#606060" stroke-width=".8"/><circle cx="3" cy="12.5" r="1.7" fill="#333"/><circle cx="9" cy="12.5" r="1.7" fill="#333"/><circle cx="13" cy="12.5" r="1.7" fill="#333"/></svg>
<div class="t m" style="left:549px;top:426px;color:#000">Добавить дополнительную перевозку</div>
<div class="t m" style="left:701px;top:426px;width:150px;text-align:right;color:#000">Shift+Ctrl+Ins</div>
<div class="t m" style="left:549px;top:447px;color:#000">Добавить доплату/надбавку</div>
<svg class="a" style="left:851px;top:448px" width="5" height="9" viewBox="0 0 5 9"><path d="M0 0 L4 4 L0 8Z" fill="#000"/></svg>
<svg class="a" style="left:530px;top:467px" width="12" height="12" viewBox="0 0 12 12"><path d="M1 1 L11 11 M11 1 L1 11" stroke="#e83a2a" stroke-width="1.6"/></svg>
<div class="t m" style="left:549px;top:468px;color:#000">Удалить</div>
<div class="t m" style="left:701px;top:468px;width:150px;text-align:right;color:#000">Ctrl+Del</div>
<div class="a" style="left:527px;top:488px;width:335px;height:1px;background:#c8c8c8"></div>
<svg class="a" style="left:528px;top:494px" width="16" height="16" viewBox="0 0 16 16"><path d="M2 14.5 L7.5 9" stroke="#c85a10" stroke-width="3.4" stroke-linecap="round"/><path d="M2.3 14 L7 9.5" stroke="#f09040" stroke-width="1.4" stroke-linecap="round"/><circle cx="10.5" cy="5.5" r="4.6" fill="#b4cdf2" stroke="#e08848" stroke-width="1.2"/><circle cx="10" cy="5" r="2" fill="#d8e6fa"/></svg>
<div class="t m" style="left:549px;top:497px;color:#000">Поиск по обоснованию</div>
<div class="t m" style="left:701px;top:497px;width:150px;text-align:right;color:#000">Ctrl+Enter</div>
<div class="t m" style="left:549px;top:518px;color:#000">Поиск по наименованию</div>
<div class="t m" style="left:701px;top:518px;width:150px;text-align:right;color:#000">Shift+Enter</div>
<div class="t m" style="left:549px;top:539px;color:#000">Выбор по классификатору...</div>
<div class="t m" style="left:701px;top:539px;width:150px;text-align:right;color:#000">Alt+Enter</div>
<div class="t m" style="left:549px;top:560px;color:#000">Проверка сметы...</div>
<div class="t m" style="left:549px;top:581px;color:#000">Замена ресурсов...</div>
<div class="t m" style="left:549px;top:602px;color:#000">Укрупнение расценок...</div>
<div class="a" style="left:527px;top:622px;width:335px;height:1px;background:#c8c8c8"></div>
<div class="t m" style="left:549px;top:631px;color:#000">Действия</div>
<svg class="a" style="left:851px;top:632px" width="5" height="9" viewBox="0 0 5 9"><path d="M0 0 L4 4 L0 8Z" fill="#000"/></svg>
<div class="a" style="left:526px;top:647px;width:337px;height:21px;background:#0078d7"></div>
<div class="t m" style="left:549px;top:652px;color:#fff">Вид</div>
<svg class="a" style="left:851px;top:653px" width="5" height="9" viewBox="0 0 5 9"><path d="M0 0 L4 4 L0 8Z" fill="#fff"/></svg>
<div class="t m" style="left:549px;top:673px;color:#000">Закладки</div>
<svg class="a" style="left:851px;top:674px" width="5" height="9" viewBox="0 0 5 9"><path d="M0 0 L4 4 L0 8Z" fill="#000"/></svg>
<div class="t m" style="left:549px;top:694px;color:#000">Итоги</div>
<svg class="a" style="left:851px;top:695px" width="5" height="9" viewBox="0 0 5 9"><path d="M0 0 L4 4 L0 8Z" fill="#000"/></svg>
<div class="t m" style="left:549px;top:715px;color:#000">Структура</div>
<svg class="a" style="left:851px;top:716px" width="5" height="9" viewBox="0 0 5 9"><path d="M0 0 L4 4 L0 8Z" fill="#000"/></svg>
<div class="a" style="left:527px;top:735px;width:335px;height:1px;background:#c8c8c8"></div>
<div class="t m" style="left:549px;top:744px;color:#000">Параметры...</div>
<div class="t m" style="left:701px;top:744px;width:150px;text-align:right;color:#000">F3</div>
<div class="a" style="left:527px;top:764px;width:335px;height:1px;background:#c8c8c8"></div>
<div class="t m" style="left:549px;top:773px;color:#000">Настроить это меню...</div>
<div class="a" style="left:859px;top:644px;width:347px;height:429px;background:#f0f0f0;border:1px solid #a0a0a0"></div>
<div class="t m" style="left:884px;top:652px;color:#000">Поправки</div>
<div class="t m" style="left:1042px;top:652px;width:150px;text-align:right;color:#000">Ctrl+F2</div>
<div class="t m" style="left:884px;top:673px;color:#000">Формулы</div>
<div class="t m" style="left:1042px;top:673px;width:150px;text-align:right;color:#000">Ctrl+F3</div>
<div class="t m" style="left:884px;top:694px;color:#000">Индексы</div>
<div class="t m" style="left:1042px;top:694px;width:150px;text-align:right;color:#000">Ctrl+F5</div>
<div class="t m" style="left:884px;top:715px;color:#000">Переменные</div>
<div class="t m" style="left:1042px;top:715px;width:150px;text-align:right;color:#000">F2</div>
<div class="t m" style="left:884px;top:736px;color:#000">Строка формул</div>
<div class="t m" style="left:1042px;top:736px;width:150px;text-align:right;color:#000">F4</div>
<div class="a" style="left:861px;top:752px;width:343px;height:21px;background:#0078d7"></div>
<div class="t m" style="left:884px;top:757px;color:#fff">Панель цен</div>
<div class="t m" style="left:1042px;top:757px;width:150px;text-align:right;color:#fff">F5</div>
<div class="t m" style="left:884px;top:778px;color:#000">Сметные ресурсы</div>
<div class="t m" style="left:1042px;top:778px;width:150px;text-align:right;color:#000">F6</div>
<div class="t m" style="left:884px;top:799px;color:#000">Нормативные ресурсы</div>
<div class="t m" style="left:1042px;top:799px;width:150px;text-align:right;color:#000">F7</div>
<div class="t m" style="left:884px;top:820px;color:#000">Лимитированные затраты</div>
<div class="t m" style="left:1042px;top:820px;width:150px;text-align:right;color:#000">F9</div>
<div class="t m" style="left:884px;top:841px;color:#000">Полное наименование</div>
<div class="t m" style="left:884px;top:862px;color:#000">Информация ячейки</div>
<div class="t m" style="left:884px;top:883px;color:#000">Структура объекта</div>
<div class="t m" style="left:884px;top:904px;color:#000">Выделение строк</div>
<div class="t m" style="left:884px;top:925px;color:#000">Ревизия</div>
<div class="t m" style="left:884px;top:946px;color:#000">Конъюнктурный анализ</div>
<div class="a" style="left:862px;top:966px;width:341px;height:1px;background:#c8c8c8"></div>
<div class="t m" style="left:884px;top:975px;color:#000">Закрепить окна</div>
<div class="a" style="left:862px;top:995px;width:341px;height:1px;background:#c8c8c8"></div>
<div class="t m" style="left:884px;top:1004px;color:#000">Показывать полную единицу измерения</div>
<div class="t m" style="left:1042px;top:1004px;width:150px;text-align:right;color:#000">Shift+Ctrl+E</div>
<div class="a" style="left:862px;top:1024px;width:341px;height:1px;background:#c8c8c8"></div>
<div class="t m" style="left:884px;top:1033px;color:#000">Настройка вида таблицы...</div>
<div class="t m" style="left:884px;top:1054px;color:#000">Восстановить вид по умолчанию</div>
<div class="a" style="left:864px;top:732px;width:16px;height:20px;background:#f8f8f8;border:1px solid #e0e0e0"></div>
<svg class="a" style="left:866px;top:737px" width="11" height="10" viewBox="0 0 11 10"><path d="M1 5 L4 8 L10 1" stroke="#000" stroke-width="2" fill="none"/></svg>
<div class="a" style="left:859px;top:749px;width:348px;height:26px;border:3px solid #ff0000"></div>
<div class="a" style="left:0px;top:0px;width:1759px;height:1px;background:#a0a0a0"></div>
<div class="a" style="left:0px;top:0px;width:1px;height:1119px;background:#707070"></div>
<div class="a" style="left:1px;top:100px;width:1px;height:1016px;background:#fff"></div>
<div class="a" style="left:1756px;top:0px;width:3px;height:1119px;background:#6d6d6d"></div>
<div class="a" style="left:1755px;top:105px;width:1px;height:961px;background:#6d6d6d"></div>
<div class="a" style="left:1px;top:1116px;width:1755px;height:2px;background:#fff"></div>
<div class="a" style="left:0px;top:1118px;width:1759px;height:1px;background:#707070"></div>
</body></html>
